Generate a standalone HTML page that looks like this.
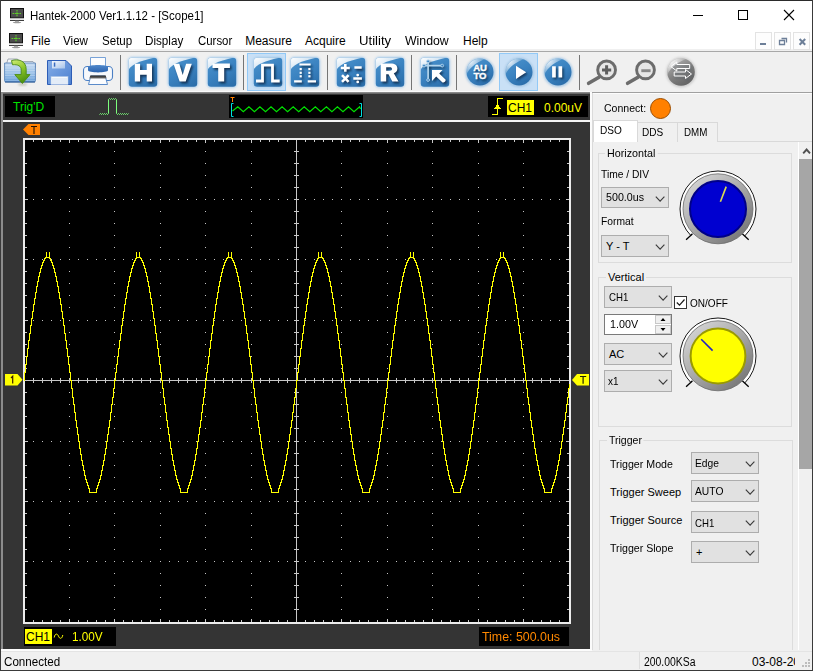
<!DOCTYPE html>
<html><head><meta charset="utf-8"><title>Hantek-2000</title>
<style>
html,body{margin:0;padding:0;}
body{width:813px;height:671px;overflow:hidden;position:relative;background:#f0f0f0;font-family:"Liberation Sans",sans-serif;font-size:11px;color:#000;}
.abs{position:absolute;}
.t{position:absolute;white-space:nowrap;line-height:1;}
.combo{position:absolute;box-sizing:border-box;background:#e1e1e1;border:1px solid #adadad;}
.combo .t{left:4px;}
.chev{position:absolute;right:3px;top:8px;width:10px;height:7px;}
.grp{position:absolute;box-sizing:border-box;border:1px solid #dcdcdc;}
.grp>.lbl{position:absolute;background:#f0f0f0;padding:0 2px;white-space:nowrap;line-height:1;}
.sep{position:absolute;width:1px;background:#757575;top:55px;height:35px;}
.mi{position:absolute;top:34px;font-size:12px;white-space:nowrap;line-height:14px;}
#title{transform:scaleX(0.956);transform-origin:0 0;}
#m_View{transform:scaleX(0.969);transform-origin:0 0;}
#m_Setup{transform:scaleX(0.964);transform-origin:0 0;}
#m_Display{transform:scaleX(0.973);transform-origin:0 0;margin-left:-0.64px;}
#m_Cursor{transform:scaleX(0.951);transform-origin:0 0;}
#m_Measure{margin-left:-0.80px;}
#m_Utility{transform:scaleX(1.095);transform-origin:0 0;}
#m_Window{transform:scaleX(1.024);transform-origin:0 0;}
#v1{transform:scaleX(0.979);transform-origin:0 0;margin-left:-0.96px;}
#time{transform:scaleX(1.032);transform-origin:0 0;}
#connected{transform:scaleX(0.968);transform-origin:0 0;}
#ksa{transform:scaleX(0.867);transform-origin:0 0;}
#connect{transform:scaleX(0.958);transform-origin:0 0;}
#dso{transform:scaleX(0.917);transform-origin:0 0;}
#dds{transform:scaleX(0.913);transform-origin:0 0;}
#dmm{transform:scaleX(0.889);transform-origin:0 0;}
#lh{transform:scaleX(0.977);transform-origin:0 0;margin-left:-1.28px;}
#timediv{transform:scaleX(0.932);transform-origin:0 0;}
#c_time{transform:scaleX(0.971);transform-origin:0 0;}
#format{transform:scaleX(0.936);transform-origin:0 0;}
#c_ch1_1{transform:scaleX(0.880);transform-origin:0 0;}
#onoff{transform:scaleX(0.912);transform-origin:0 0;}
#spinv{transform:scaleX(0.978);transform-origin:0 0;}
#c_x1{transform:scaleX(0.907);transform-origin:0 0;margin-left:-0.72px;}
#lt{transform:scaleX(0.959);transform-origin:0 0;}
#tm{transform:scaleX(0.968);transform-origin:0 0;}
#tsl{transform:scaleX(0.965);transform-origin:0 0;}
#c_edge{transform:scaleX(0.935);transform-origin:0 0;margin-left:-0.80px;}
#c_auto{transform:scaleX(0.936);transform-origin:0 0;margin-left:-0.80px;}
#c_ch1_2{transform:scaleX(0.880);transform-origin:0 0;margin-left:-0.56px;}
</style></head><body>

<!-- window frame -->
<div class="abs" style="left:0;top:0;width:813px;height:49px;background:#fff;"></div>
<div class="abs" style="left:0;top:0;width:813px;height:1px;background:#2b2b2b;"></div>
<div class="abs" style="left:0;top:0;width:1px;height:671px;background:#3a3a3a;"></div>
<div class="abs" style="left:812px;top:0;width:1px;height:671px;background:#3a3a3a;"></div>
<div class="abs" style="left:0;top:670px;width:813px;height:1px;background:#3a3a3a;"></div>

<!-- title -->
<svg class="abs" style="left:9px;top:7px" width="16" height="17" viewBox="0 0 16 17"><rect x="1" y="1" width="14" height="10.500" fill="#111"/><rect x="2" y="2" width="12" height="8.500" fill="#4a4a4a"/><path d="M2 4h12M2 6h12M2 8h12" stroke="#5a5a5a" stroke-width="0.500"/><path d="M3.500 6.500h9M8 3v7" stroke="#5fd028" stroke-width="1.100" stroke-dasharray="1.600 0.700"/><rect x="1" y="11.500" width="14" height="2" fill="#e8e8e8"/><rect x="1" y="13" width="14" height="0.800" fill="#111"/><rect x="6" y="13.800" width="4" height="1.200" fill="#aaa"/><ellipse cx="8" cy="15.500" rx="4.200" ry="0.800" fill="#9a9a9a"/></svg>
<div class="t" id="title" style="left:30px;top:9px;font-size:12px;line-height:14px;">Hantek-2000 Ver1.1.12 - [Scope1]</div>
<!-- window buttons -->
<svg class="abs" style="left:680px;top:0" width="133" height="31" viewBox="0 0 133 31"><path d="M13 15.5h10" stroke="#000" stroke-width="1"/><rect x="58.5" y="10.500" width="9" height="9" fill="none" stroke="#000" stroke-width="1"/><path d="M104 10l10 10M114 10l-10 10" stroke="#000" stroke-width="1.1"/></svg>

<!-- menu -->
<svg class="abs" style="left:8px;top:32px" width="16" height="17" viewBox="0 0 16 17"><rect x="1" y="1" width="14" height="10.500" fill="#111"/><rect x="2" y="2" width="12" height="8.500" fill="#4a4a4a"/><path d="M2 4h12M2 6h12M2 8h12" stroke="#5a5a5a" stroke-width="0.500"/><path d="M3.500 6.500h9M8 3v7" stroke="#5fd028" stroke-width="1.100" stroke-dasharray="1.600 0.700"/><rect x="1" y="11.500" width="14" height="2" fill="#e8e8e8"/><rect x="1" y="13" width="14" height="0.800" fill="#111"/><rect x="6" y="13.800" width="4" height="1.200" fill="#aaa"/><ellipse cx="8" cy="15.500" rx="4.200" ry="0.800" fill="#9a9a9a"/></svg>
<div class="mi" style="left:31px" id="m_File">File</div>
<div class="mi" style="left:63px" id="m_View">View</div>
<div class="mi" style="left:102px" id="m_Setup">Setup</div>
<div class="mi" style="left:146px" id="m_Display">Display</div>
<div class="mi" style="left:198px" id="m_Cursor">Cursor</div>
<div class="mi" style="left:246px" id="m_Measure">Measure</div>
<div class="mi" style="left:305px" id="m_Acquire">Acquire</div>
<div class="mi" style="left:359px" id="m_Utility">Utility</div>
<div class="mi" style="left:405px" id="m_Window">Window</div>
<div class="mi" style="left:463px" id="m_Help">Help</div>
<!-- MDI buttons -->
<div class="abs" style="left:755px;top:32px;width:17px;height:18px;box-sizing:border-box;border:1px solid #e3e3e3;background:#fdfdfd"></div>
<div class="abs" style="left:774px;top:32px;width:17px;height:18px;box-sizing:border-box;border:1px solid #e3e3e3;background:#fdfdfd"></div>
<div class="abs" style="left:793px;top:32px;width:17px;height:18px;box-sizing:border-box;border:1px solid #e3e3e3;background:#fdfdfd"></div>
<svg class="abs" style="left:755px;top:32px" width="56" height="18" viewBox="0 0 56 18"><rect x="5" y="11" width="6" height="2" fill="#6d7f98"/><path d="M26.500 6.500h5v4M24.500 8.500h5v4h-5z" fill="none" stroke="#6d7f98" stroke-width="1.300"/><path d="M44.600 7l5.600 5.800M50.200 7l-5.600 5.800" stroke="#6d7f98" stroke-width="2"/></svg>
<div class="abs" style="left:1px;top:51px;width:811px;height:1px;background:#a8a8a8;"></div>

<!-- toolbar -->
<div class="abs" style="left:1px;top:52px;width:811px;height:39px;background:#f0f0f0;"></div>
<div class="abs" style="left:247px;top:53px;width:39px;height:38px;box-sizing:border-box;background:#c9e0f6;border:1px solid #92c9f7;"></div>
<div class="abs" style="left:499px;top:53px;width:39px;height:38px;box-sizing:border-box;background:#c9e0f6;border:1px solid #92c9f7;"></div>
<div class="sep" style="left:120px"></div>
<div class="sep" style="left:243px"></div>
<div class="sep" style="left:327px"></div>
<div class="sep" style="left:411px"></div>
<div class="sep" style="left:456px"></div>
<div class="sep" style="left:579px"></div>
<svg class="abs" style="left:3px;top:56px" width="36" height="32" viewBox="0 0 36 32">
<defs><linearGradient id="fo1" x1="0" y1="0" x2="0" y2="1"><stop offset="0" stop-color="#c8dcf2"/><stop offset="0.6" stop-color="#94bce6"/><stop offset="1" stop-color="#5f98d6"/></linearGradient>
<linearGradient id="fo2" x1="0" y1="0" x2="0.4" y2="1"><stop offset="0" stop-color="#d2ee7a"/><stop offset="0.5" stop-color="#8cc62a"/><stop offset="1" stop-color="#4f9412"/></linearGradient>
<filter id="fo3" x="-30%" y="-30%" width="160%" height="160%"><feGaussianBlur stdDeviation="0.9"/></filter></defs>
<path d="M3.500 8l1.500-5h9.500l1.500 2.500h14l2.400 3v3h-29z" fill="#f2f4f7" stroke="#8e98a6" stroke-width="0.800"/>
<path d="M1.600 7h30.800v17.500c0 1-0.500 1.500-1.500 1.500h-27.800c-1 0-1.500-0.500-1.500-1.500z" fill="url(#fo1)" stroke="#4a78b2" stroke-width="0.800"/>
<path d="M2 9.500h30M2 12h30M2 14.500h30M2 17h30M2 19.500h30M2 22h30M2 24.300h30" stroke="#dceaf8" stroke-width="0.600" opacity="0.600"/>
<path d="M2 26h30" stroke="#355f96" stroke-width="1"/>
<ellipse cx="19.500" cy="28.300" rx="4.500" ry="1.300" fill="#8a8a70" opacity="0.450" filter="url(#fo3)"/>
<path d="M8.500 4.600C15 2.600 23.200 4.500 23.200 13.500V18.600H27L19.400 27.500L11.800 18.600H18.200V14C18.200 10 15 8.300 9.500 8.800z" fill="url(#fo2)" stroke="#4a8a12" stroke-width="0.900" stroke-linejoin="round"/>
</svg>
<svg class="abs" style="left:45px;top:58px" width="30" height="30" viewBox="0 0 30 30">
<defs><linearGradient id="fl1" x1="0" y1="0" x2="1" y2="1"><stop offset="0" stop-color="#86aee8"/><stop offset="1" stop-color="#4c80d0"/></linearGradient>
<linearGradient id="fl2" x1="0" y1="0" x2="1" y2="1"><stop offset="0" stop-color="#f4f8fd"/><stop offset="1" stop-color="#a8c4ea"/></linearGradient></defs>
<path d="M2.500 2.500h18.500l5.500 5.500v18.500h-24z" fill="url(#fl1)" stroke="#2c5cb6" stroke-width="1"/>
<path d="M7 3h13v7.500h-13z" fill="url(#fl2)"/>
<rect x="8.800" y="4.500" width="1.500" height="4.200" fill="#3a6cc0"/>
<rect x="6" y="18.500" width="17" height="8" fill="#f6f9fd" stroke="#a9c2e4" stroke-width="0.600"/>
<path d="M7 21h15M7 23h15M7 25h15" stroke="#c2d4ec" stroke-width="0.700"/>
</svg>
<svg class="abs" style="left:81px;top:55px" width="34" height="32" viewBox="0 0 34 32">
<defs><linearGradient id="pr1" x1="0" y1="0" x2="0" y2="1"><stop offset="0" stop-color="#4f88cc"/><stop offset="1" stop-color="#2a62ae"/></linearGradient>
<linearGradient id="pr2" x1="0" y1="0" x2="0" y2="1"><stop offset="0" stop-color="#222"/><stop offset="1" stop-color="#777"/></linearGradient></defs>
<rect x="2.500" y="11.500" width="29" height="14" rx="3.800" fill="#f6f8fb" stroke="#4a7fc4" stroke-width="1.100"/>
<path d="M9.500 2.500h15v10h-15z" fill="#fbfcfe" stroke="#6a98d2" stroke-width="0.900"/>
<path d="M7 12c0-2.800 20-2.800 20 0v3.300c0 2.800-20 2.800-20 0z" fill="url(#pr1)"/>
<path d="M9.800 21h14.400l2.300 8.500h-19z" fill="#fbfcfe" stroke="#4a7fc4" stroke-width="0.900"/>
<path d="M9.300 20.500h15.400l0.900 3h-17.200z" fill="url(#pr2)"/>
</svg>
<svg class="abs" style="left:124.5px;top:53.5px" width="36" height="36.5" viewBox="-3 -3 36 36.5"><defs><linearGradient id="bH" x1="0.2" y1="0" x2="0.8" y2="1"><stop offset="0" stop-color="#4a92cc"/><stop offset="0.5" stop-color="#3a82c0"/><stop offset="1" stop-color="#2c6fab"/></linearGradient><radialGradient id="gH" cx="0" cy="0" r="1" gradientUnits="userSpaceOnUse" gradientTransform="scale(37.5,24.400000000000002)"><stop offset="0" stop-color="#fff" stop-opacity="1"/><stop offset="0.5" stop-color="#fff" stop-opacity="0.780"/><stop offset="1" stop-color="#fff" stop-opacity="0.180"/></radialGradient><filter id="fH" x="-30%" y="-30%" width="160%" height="160%"><feGaussianBlur stdDeviation="0.9"/></filter><filter id="sH" x="-30%" y="-30%" width="160%" height="160%"><feGaussianBlur stdDeviation="1.0"/></filter><clipPath id="cH"><rect x="0.800" y="0.800" width="28.4" height="28.9" rx="3.200"/></clipPath></defs><rect x="-0.300" y="-0.300" width="30.6" height="31.1" rx="4.500" fill="#a9cdec" opacity="0.900" filter="url(#fH)"/><rect x="0.800" y="0.800" width="28.4" height="28.9" rx="3.200" fill="url(#bH)"/><g clip-path="url(#cH)"><path d="M0 0H30C16.5 3 4.500 5.49 0 13.42z" fill="url(#gH)"/></g><g filter="url(#sH)" opacity="0.850" transform="translate(1.600,1.900)"><path d="M6.800 6.800h5.300v6.300h6.600v-6.300h5.300v17.700h-5.300v-6.700h-6.600v6.700h-5.300z" fill="#0a2845"/></g><path d="M6.800 6.800h5.300v6.300h6.600v-6.300h5.300v17.700h-5.300v-6.700h-6.600v6.700h-5.300z" fill="#fff"/></svg>
<svg class="abs" style="left:164.5px;top:53.5px" width="36" height="36.5" viewBox="-3 -3 36 36.5"><defs><linearGradient id="bV" x1="0.2" y1="0" x2="0.8" y2="1"><stop offset="0" stop-color="#4a92cc"/><stop offset="0.5" stop-color="#3a82c0"/><stop offset="1" stop-color="#2c6fab"/></linearGradient><radialGradient id="gV" cx="0" cy="0" r="1" gradientUnits="userSpaceOnUse" gradientTransform="scale(37.5,24.400000000000002)"><stop offset="0" stop-color="#fff" stop-opacity="1"/><stop offset="0.5" stop-color="#fff" stop-opacity="0.780"/><stop offset="1" stop-color="#fff" stop-opacity="0.180"/></radialGradient><filter id="fV" x="-30%" y="-30%" width="160%" height="160%"><feGaussianBlur stdDeviation="0.9"/></filter><filter id="sV" x="-30%" y="-30%" width="160%" height="160%"><feGaussianBlur stdDeviation="1.0"/></filter><clipPath id="cV"><rect x="0.800" y="0.800" width="28.4" height="28.9" rx="3.200"/></clipPath></defs><rect x="-0.300" y="-0.300" width="30.6" height="31.1" rx="4.500" fill="#a9cdec" opacity="0.900" filter="url(#fV)"/><rect x="0.800" y="0.800" width="28.4" height="28.9" rx="3.200" fill="url(#bV)"/><g clip-path="url(#cV)"><path d="M0 0H30C16.5 3 4.500 5.49 0 13.42z" fill="url(#gV)"/></g><g filter="url(#sV)" opacity="0.850" transform="translate(1.600,1.900)"><path d="M5.500 6.800h5.800l3.400 11.200 3.400-11.200h5.700l-6.100 17.700h-6.100z" fill="#0a2845"/></g><path d="M5.500 6.800h5.800l3.400 11.200 3.400-11.200h5.700l-6.100 17.700h-6.100z" fill="#fff"/></svg>
<svg class="abs" style="left:203.5px;top:53.5px" width="36" height="36.5" viewBox="-3 -3 36 36.5"><defs><linearGradient id="bT" x1="0.2" y1="0" x2="0.8" y2="1"><stop offset="0" stop-color="#4a92cc"/><stop offset="0.5" stop-color="#3a82c0"/><stop offset="1" stop-color="#2c6fab"/></linearGradient><radialGradient id="gT" cx="0" cy="0" r="1" gradientUnits="userSpaceOnUse" gradientTransform="scale(37.5,24.400000000000002)"><stop offset="0" stop-color="#fff" stop-opacity="1"/><stop offset="0.5" stop-color="#fff" stop-opacity="0.780"/><stop offset="1" stop-color="#fff" stop-opacity="0.180"/></radialGradient><filter id="fT" x="-30%" y="-30%" width="160%" height="160%"><feGaussianBlur stdDeviation="0.9"/></filter><filter id="sT" x="-30%" y="-30%" width="160%" height="160%"><feGaussianBlur stdDeviation="1.0"/></filter><clipPath id="cT"><rect x="0.800" y="0.800" width="28.4" height="28.9" rx="3.200"/></clipPath></defs><rect x="-0.300" y="-0.300" width="30.6" height="31.1" rx="4.500" fill="#a9cdec" opacity="0.900" filter="url(#fT)"/><rect x="0.800" y="0.800" width="28.4" height="28.9" rx="3.200" fill="url(#bT)"/><g clip-path="url(#cT)"><path d="M0 0H30C16.5 3 4.500 5.49 0 13.42z" fill="url(#gT)"/></g><g filter="url(#sT)" opacity="0.850" transform="translate(1.600,1.900)"><path d="M5.500 6.600h17.400v4.500h-5.700v13.400h-6v-13.400h-5.700z" fill="#0a2845"/></g><path d="M5.500 6.600h17.400v4.500h-5.700v13.400h-6v-13.400h-5.700z" fill="#fff"/></svg>
<svg class="abs" style="left:249.5px;top:53.5px" width="36" height="36.5" viewBox="-3 -3 36 36.5"><defs><linearGradient id="bP" x1="0.2" y1="0" x2="0.8" y2="1"><stop offset="0" stop-color="#4a92cc"/><stop offset="0.5" stop-color="#3a82c0"/><stop offset="1" stop-color="#2c6fab"/></linearGradient><radialGradient id="gP" cx="0" cy="0" r="1" gradientUnits="userSpaceOnUse" gradientTransform="scale(37.5,24.400000000000002)"><stop offset="0" stop-color="#fff" stop-opacity="1"/><stop offset="0.5" stop-color="#fff" stop-opacity="0.780"/><stop offset="1" stop-color="#fff" stop-opacity="0.180"/></radialGradient><filter id="fP" x="-30%" y="-30%" width="160%" height="160%"><feGaussianBlur stdDeviation="0.9"/></filter><filter id="sP" x="-30%" y="-30%" width="160%" height="160%"><feGaussianBlur stdDeviation="1.0"/></filter><clipPath id="cP"><rect x="0.800" y="0.800" width="28.4" height="28.9" rx="3.200"/></clipPath></defs><rect x="-0.300" y="-0.300" width="30.6" height="31.1" rx="4.500" fill="#a9cdec" opacity="0.900" filter="url(#fP)"/><rect x="0.800" y="0.800" width="28.4" height="28.9" rx="3.200" fill="url(#bP)"/><g clip-path="url(#cP)"><path d="M0 0H30C16.5 3 4.500 5.49 0 13.42z" fill="url(#gP)"/></g><g filter="url(#sP)" opacity="0.850" transform="translate(1.600,1.900)"><path d="M3 24H9.500V8.200H19.500V24H26.700" fill="none" stroke="#0a2845" stroke-width="2.800"/></g><path d="M3 24H9.500V8.200H19.500V24H26.700" fill="none" stroke="#fff" stroke-width="2.800"/></svg>
<svg class="abs" style="left:287px;top:53.5px" width="36" height="36.5" viewBox="-3 -3 36 36.5"><defs><linearGradient id="bD" x1="0.2" y1="0" x2="0.8" y2="1"><stop offset="0" stop-color="#4a92cc"/><stop offset="0.5" stop-color="#3a82c0"/><stop offset="1" stop-color="#2c6fab"/></linearGradient><radialGradient id="gD" cx="0" cy="0" r="1" gradientUnits="userSpaceOnUse" gradientTransform="scale(37.5,24.400000000000002)"><stop offset="0" stop-color="#fff" stop-opacity="1"/><stop offset="0.5" stop-color="#fff" stop-opacity="0.780"/><stop offset="1" stop-color="#fff" stop-opacity="0.180"/></radialGradient><filter id="fD" x="-30%" y="-30%" width="160%" height="160%"><feGaussianBlur stdDeviation="0.9"/></filter><filter id="sD" x="-30%" y="-30%" width="160%" height="160%"><feGaussianBlur stdDeviation="1.0"/></filter><clipPath id="cD"><rect x="0.800" y="0.800" width="28.4" height="28.9" rx="3.200"/></clipPath></defs><rect x="-0.300" y="-0.300" width="30.6" height="31.1" rx="4.500" fill="#a9cdec" opacity="0.900" filter="url(#fD)"/><rect x="0.800" y="0.800" width="28.4" height="28.9" rx="3.200" fill="url(#bD)"/><g clip-path="url(#cD)"><path d="M0 0H30C16.5 3 4.500 5.49 0 13.42z" fill="url(#gD)"/></g><g filter="url(#sD)" opacity="0.850" transform="translate(1.600,1.900)"><path d="M9.400 6.600h11.300v2h-11.300zM4.100 23.200h7.700v2.200h-7.700zM17.700 23.200h8.300v2.200h-8.300z" fill="#0a2845"/><rect x="9.6" y="11" width="2.200" height="2.200" fill="#0a2845"/><rect x="9.6" y="14.7" width="2.200" height="2.200" fill="#0a2845"/><rect x="9.6" y="18.2" width="2.200" height="2.200" fill="#0a2845"/><rect x="18.3" y="11" width="2.200" height="2.200" fill="#0a2845"/><rect x="18.3" y="14.7" width="2.200" height="2.200" fill="#0a2845"/><rect x="18.3" y="18.2" width="2.200" height="2.200" fill="#0a2845"/></g><path d="M9.400 6.600h11.300v2h-11.300zM4.100 23.200h7.700v2.200h-7.700zM17.700 23.200h8.300v2.200h-8.300z" fill="#fff"/><rect x="9.6" y="11" width="2.200" height="2.200" fill="#fff"/><rect x="9.6" y="14.7" width="2.200" height="2.200" fill="#fff"/><rect x="9.6" y="18.2" width="2.200" height="2.200" fill="#fff"/><rect x="18.3" y="11" width="2.200" height="2.200" fill="#fff"/><rect x="18.3" y="14.7" width="2.200" height="2.200" fill="#fff"/><rect x="18.3" y="18.2" width="2.200" height="2.200" fill="#fff"/></svg>
<svg class="abs" style="left:332.5px;top:53.5px" width="36" height="36.5" viewBox="-3 -3 36 36.5"><defs><linearGradient id="bM" x1="0.2" y1="0" x2="0.8" y2="1"><stop offset="0" stop-color="#4a92cc"/><stop offset="0.5" stop-color="#3a82c0"/><stop offset="1" stop-color="#2c6fab"/></linearGradient><radialGradient id="gM" cx="0" cy="0" r="1" gradientUnits="userSpaceOnUse" gradientTransform="scale(37.5,24.400000000000002)"><stop offset="0" stop-color="#fff" stop-opacity="1"/><stop offset="0.5" stop-color="#fff" stop-opacity="0.780"/><stop offset="1" stop-color="#fff" stop-opacity="0.180"/></radialGradient><filter id="fM" x="-30%" y="-30%" width="160%" height="160%"><feGaussianBlur stdDeviation="0.9"/></filter><filter id="sM" x="-30%" y="-30%" width="160%" height="160%"><feGaussianBlur stdDeviation="1.0"/></filter><clipPath id="cM"><rect x="0.800" y="0.800" width="28.4" height="28.9" rx="3.200"/></clipPath></defs><rect x="-0.300" y="-0.300" width="30.6" height="31.1" rx="4.500" fill="#a9cdec" opacity="0.900" filter="url(#fM)"/><rect x="0.800" y="0.800" width="28.4" height="28.9" rx="3.200" fill="url(#bM)"/><g clip-path="url(#cM)"><path d="M0 0H30C16.5 3 4.500 5.49 0 13.42z" fill="url(#gM)"/></g><g filter="url(#sM)" opacity="0.850" transform="translate(1.600,1.900)"><path d="M4.800 11h9M9.300 7v7.800M18.400 10.500h7.300M6 18.200l6.600 6.600M12.600 18.200l-6.600 6.600M17.300 21.500h8.600" stroke="#0a2845" stroke-width="2.600" fill="none"/><circle cx="21.700" cy="18.100" r="1.400" fill="#0a2845"/><circle cx="21.700" cy="24.900" r="1.400" fill="#0a2845"/></g><path d="M4.800 11h9M9.300 7v7.800M18.400 10.500h7.300M6 18.200l6.600 6.600M12.600 18.200l-6.600 6.600M17.300 21.500h8.600" stroke="#fff" stroke-width="2.600" fill="none"/><circle cx="21.700" cy="18.100" r="1.400" fill="#fff"/><circle cx="21.700" cy="24.900" r="1.400" fill="#fff"/></svg>
<svg class="abs" style="left:371.5px;top:53.5px" width="36" height="36.5" viewBox="-3 -3 36 36.5"><defs><linearGradient id="bR" x1="0.2" y1="0" x2="0.8" y2="1"><stop offset="0" stop-color="#4a92cc"/><stop offset="0.5" stop-color="#3a82c0"/><stop offset="1" stop-color="#2c6fab"/></linearGradient><radialGradient id="gR" cx="0" cy="0" r="1" gradientUnits="userSpaceOnUse" gradientTransform="scale(37.5,24.400000000000002)"><stop offset="0" stop-color="#fff" stop-opacity="1"/><stop offset="0.5" stop-color="#fff" stop-opacity="0.780"/><stop offset="1" stop-color="#fff" stop-opacity="0.180"/></radialGradient><filter id="fR" x="-30%" y="-30%" width="160%" height="160%"><feGaussianBlur stdDeviation="0.9"/></filter><filter id="sR" x="-30%" y="-30%" width="160%" height="160%"><feGaussianBlur stdDeviation="1.0"/></filter><clipPath id="cR"><rect x="0.800" y="0.800" width="28.4" height="28.9" rx="3.200"/></clipPath></defs><rect x="-0.300" y="-0.300" width="30.6" height="31.1" rx="4.500" fill="#a9cdec" opacity="0.900" filter="url(#fR)"/><rect x="0.800" y="0.800" width="28.4" height="28.9" rx="3.200" fill="url(#bR)"/><g clip-path="url(#cR)"><path d="M0 0H30C16.5 3 4.500 5.49 0 13.42z" fill="url(#gR)"/></g><g filter="url(#sR)" opacity="0.850" transform="translate(1.600,1.900)"><path d="M5.700 6.400h9.800c4.600 0 6.900 1.900 6.900 5.200 0 2.500-1.300 4-3.600 4.700l4.700 8.200h-6.200l-3.800-7.300h-2.300v7.300h-5.500zM11.200 10.300v3.400h3.600c1.500 0 2.200-0.600 2.200-1.700s-0.700-1.700-2.200-1.700z" fill="#0a2845" fill-rule="evenodd"/></g><path d="M5.700 6.400h9.800c4.600 0 6.900 1.900 6.900 5.200 0 2.500-1.300 4-3.600 4.700l4.700 8.200h-6.200l-3.800-7.300h-2.300v7.300h-5.500zM11.200 10.300v3.400h3.600c1.500 0 2.200-0.600 2.200-1.700s-0.700-1.700-2.200-1.700z" fill="#fff" fill-rule="evenodd"/></svg>
<svg class="abs" style="left:416.5px;top:53.5px" width="36" height="36.5" viewBox="-3 -3 36 36.5"><defs><linearGradient id="bC" x1="0.2" y1="0" x2="0.8" y2="1"><stop offset="0" stop-color="#4a92cc"/><stop offset="0.5" stop-color="#3a82c0"/><stop offset="1" stop-color="#2c6fab"/></linearGradient><radialGradient id="gC" cx="0" cy="0" r="1" gradientUnits="userSpaceOnUse" gradientTransform="scale(37.5,24.400000000000002)"><stop offset="0" stop-color="#fff" stop-opacity="1"/><stop offset="0.5" stop-color="#fff" stop-opacity="0.780"/><stop offset="1" stop-color="#fff" stop-opacity="0.180"/></radialGradient><filter id="fC" x="-30%" y="-30%" width="160%" height="160%"><feGaussianBlur stdDeviation="0.9"/></filter><filter id="sC" x="-30%" y="-30%" width="160%" height="160%"><feGaussianBlur stdDeviation="1.0"/></filter><clipPath id="cC"><rect x="0.800" y="0.800" width="28.4" height="28.9" rx="3.200"/></clipPath></defs><rect x="-0.300" y="-0.300" width="30.6" height="31.1" rx="4.500" fill="#a9cdec" opacity="0.900" filter="url(#fC)"/><rect x="0.800" y="0.800" width="28.4" height="28.9" rx="3.200" fill="url(#bC)"/><g clip-path="url(#cC)"><path d="M0 0H30C16.5 3 4.500 5.49 0 13.42z" fill="url(#gC)"/></g><g filter="url(#sC)" opacity="0.850" transform="translate(1.600,1.900)"><path d="M4.200 8.600H21.900M8.100 4.900V22.600" stroke="#0a2845" stroke-width="1.700" fill="none"/><g fill="#3a82c0" stroke="#0a2845" stroke-width="0.900"><circle cx="4" cy="8.600" r="1.400"/><circle cx="22.200" cy="8.600" r="1.400"/><circle cx="8.100" cy="4.300" r="1.400"/><circle cx="8.100" cy="23" r="1.400"/></g><path d="M12 13h10.500l-3.300 3.400 6.300 6c1 1 -2 4-3 3l-6.300-6-4.200 4.600z" fill="#0a2845"/></g><path d="M4.200 8.600H21.900M8.100 4.900V22.600" stroke="#b4d6ee" stroke-width="1.700" fill="none"/><g fill="#3a82c0" stroke="#b4d6ee" stroke-width="0.900"><circle cx="4" cy="8.600" r="1.400"/><circle cx="22.200" cy="8.600" r="1.400"/><circle cx="8.100" cy="4.300" r="1.400"/><circle cx="8.100" cy="23" r="1.400"/></g><path d="M12 13h10.500l-3.300 3.400 6.300 6c1 1 -2 4-3 3l-6.300-6-4.200 4.600z" fill="#fff"/></svg>
<svg class="abs" style="left:461.5px;top:54.2px" width="36" height="36" viewBox="-18 -18 36 36"><defs><linearGradient id="bA" x1="0.2" y1="0" x2="0.8" y2="1"><stop offset="0" stop-color="#4a92cc"/><stop offset="0.5" stop-color="#3a82c0"/><stop offset="1" stop-color="#2a6aa6"/></linearGradient><radialGradient id="gA" cx="-10" cy="-11" r="16" gradientUnits="userSpaceOnUse"><stop offset="0" stop-color="#fff" stop-opacity="0.900"/><stop offset="0.5" stop-color="#fff" stop-opacity="0.500"/><stop offset="1" stop-color="#fff" stop-opacity="0.100"/></radialGradient><filter id="fA" x="-30%" y="-30%" width="160%" height="160%"><feGaussianBlur stdDeviation="0.8"/></filter><filter id="sA" x="-30%" y="-30%" width="160%" height="160%"><feGaussianBlur stdDeviation="1.0"/></filter><clipPath id="cA"><circle cx="0" cy="0" r="13.5"/></clipPath></defs><circle cx="0.200" cy="0.400" r="14.8" fill="#a4c6e4" opacity="0.900" filter="url(#fA)"/><circle cx="0" cy="0" r="13.5" fill="url(#bA)"/><g clip-path="url(#cA)"><path d="M-16 -16H14C4 -13 -10 -8 -14 4H-16z" fill="url(#gA)"/></g><g filter="url(#sA)" opacity="0.8" transform="translate(1.400,1.700)"><text x="0" y="-0.800" text-anchor="middle" font-family="Liberation Sans, sans-serif" font-weight="bold" font-size="9.500" fill="#0a2845" stroke="#0a2845" stroke-width="0.350">AU</text><text x="0" y="7.200" text-anchor="middle" font-family="Liberation Sans, sans-serif" font-weight="bold" font-size="9.500" fill="#0a2845" stroke="#0a2845" stroke-width="0.350">TO</text></g><text x="0" y="-0.800" text-anchor="middle" font-family="Liberation Sans, sans-serif" font-weight="bold" font-size="9.500" fill="#fff" stroke="#fff" stroke-width="0.350">AU</text><text x="0" y="7.200" text-anchor="middle" font-family="Liberation Sans, sans-serif" font-weight="bold" font-size="9.500" fill="#fff" stroke="#fff" stroke-width="0.350">TO</text></svg>
<svg class="abs" style="left:501.4px;top:54.2px" width="36" height="36" viewBox="-18 -18 36 36"><defs><linearGradient id="bY" x1="0.2" y1="0" x2="0.8" y2="1"><stop offset="0" stop-color="#4a92cc"/><stop offset="0.5" stop-color="#3a82c0"/><stop offset="1" stop-color="#2a6aa6"/></linearGradient><radialGradient id="gY" cx="-10" cy="-11" r="16" gradientUnits="userSpaceOnUse"><stop offset="0" stop-color="#fff" stop-opacity="0.900"/><stop offset="0.5" stop-color="#fff" stop-opacity="0.500"/><stop offset="1" stop-color="#fff" stop-opacity="0.100"/></radialGradient><filter id="fY" x="-30%" y="-30%" width="160%" height="160%"><feGaussianBlur stdDeviation="0.8"/></filter><filter id="sY" x="-30%" y="-30%" width="160%" height="160%"><feGaussianBlur stdDeviation="1.0"/></filter><clipPath id="cY"><circle cx="0" cy="0" r="13.5"/></clipPath></defs><circle cx="0.200" cy="0.400" r="14.8" fill="#a4c6e4" opacity="0.900" filter="url(#fY)"/><circle cx="0" cy="0" r="13.5" fill="url(#bY)"/><g clip-path="url(#cY)"><path d="M-16 -16H14C4 -13 -10 -8 -14 4H-16z" fill="url(#gY)"/></g><g filter="url(#sY)" opacity="0.8" transform="translate(1.400,1.700)"><path d="M-3 -6.300L7.200 0.300L-3 6.900z" fill="#0a2845"/></g><path d="M-3 -6.300L7.200 0.300L-3 6.900z" fill="#fff"/></svg>
<svg class="abs" style="left:539.6px;top:54.2px" width="36" height="36" viewBox="-18 -18 36 36"><defs><linearGradient id="bZ" x1="0.2" y1="0" x2="0.8" y2="1"><stop offset="0" stop-color="#4a92cc"/><stop offset="0.5" stop-color="#3a82c0"/><stop offset="1" stop-color="#2a6aa6"/></linearGradient><radialGradient id="gZ" cx="-10" cy="-11" r="16" gradientUnits="userSpaceOnUse"><stop offset="0" stop-color="#fff" stop-opacity="0.900"/><stop offset="0.5" stop-color="#fff" stop-opacity="0.500"/><stop offset="1" stop-color="#fff" stop-opacity="0.100"/></radialGradient><filter id="fZ" x="-30%" y="-30%" width="160%" height="160%"><feGaussianBlur stdDeviation="0.8"/></filter><filter id="sZ" x="-30%" y="-30%" width="160%" height="160%"><feGaussianBlur stdDeviation="1.0"/></filter><clipPath id="cZ"><circle cx="0" cy="0" r="13.5"/></clipPath></defs><circle cx="0.200" cy="0.400" r="14.8" fill="#a4c6e4" opacity="0.900" filter="url(#fZ)"/><circle cx="0" cy="0" r="13.5" fill="url(#bZ)"/><g clip-path="url(#cZ)"><path d="M-16 -16H14C4 -13 -10 -8 -14 4H-16z" fill="url(#gZ)"/></g><g filter="url(#sZ)" opacity="0.8" transform="translate(1.400,1.700)"><path d="M-5.900 -5.700h3.700v11.200h-3.700zM0.500 -5.700h3.700v11.200h-3.700z" fill="#0a2845"/></g><path d="M-5.900 -5.700h3.700v11.200h-3.700zM0.500 -5.700h3.700v11.200h-3.700z" fill="#fff"/></svg>
<svg class="abs" style="left:585px;top:56px" width="36" height="32" viewBox="0 0 36 32"><path d="M14 21.200L3.600 27.300" stroke="#6c6c6c" stroke-width="3.600" stroke-linecap="round"/><circle cx="21.600" cy="13.900" r="8.900" fill="#e6e6e6" stroke="#6c6c6c" stroke-width="2.900"/><path d="M17 13.900h9.200M21.600 9.300v9.200" stroke="#5e5e5e" stroke-width="3"/></svg>
<svg class="abs" style="left:624px;top:56px" width="36" height="32" viewBox="0 0 36 32"><path d="M14 21.200L3.600 27.300" stroke="#6c6c6c" stroke-width="3.600" stroke-linecap="round"/><circle cx="21.500" cy="13.900" r="8.900" fill="#e6e6e6" stroke="#6c6c6c" stroke-width="2.900"/><path d="M17.300 14.700h9.300" stroke="#888" stroke-width="2.900"/></svg>
<svg class="abs" style="left:662.5px;top:54.2px" width="36" height="36" viewBox="-18 -18 36 36"><defs><linearGradient id="bG" x1="0.2" y1="0" x2="0.8" y2="1"><stop offset="0" stop-color="#b4b4b4"/><stop offset="0.5" stop-color="#808080"/><stop offset="1" stop-color="#606060"/></linearGradient><radialGradient id="gG" cx="-10" cy="-11" r="16" gradientUnits="userSpaceOnUse"><stop offset="0" stop-color="#fff" stop-opacity="0.900"/><stop offset="0.5" stop-color="#fff" stop-opacity="0.500"/><stop offset="1" stop-color="#fff" stop-opacity="0.100"/></radialGradient><filter id="fG" x="-30%" y="-30%" width="160%" height="160%"><feGaussianBlur stdDeviation="0.8"/></filter><filter id="sG" x="-30%" y="-30%" width="160%" height="160%"><feGaussianBlur stdDeviation="1.0"/></filter><clipPath id="cG"><circle cx="0" cy="0" r="13.799999999999999"/></clipPath></defs><circle cx="0.200" cy="0.400" r="15.1" fill="#cacaca" opacity="0.900" filter="url(#fG)"/><circle cx="0" cy="0" r="13.799999999999999" fill="url(#bG)"/><g clip-path="url(#cG)"><path d="M-16 -16H14C4 -13 -10 -8 -14 4H-16z" fill="url(#gG)"/></g><g filter="url(#sG)" opacity="0.2" transform="translate(1.400,1.700)"><path d="M-10.200 -5.500L-4.200 -10V-7.500H8.700V-3.500H-4.200V-1z M10.500 2L4.500 -2.500V0H-6.800V4H4.500V6.500z" fill="none" stroke="#0a2845" stroke-width="1" stroke-linejoin="miter"/></g><path d="M-10.200 -5.500L-4.200 -10V-7.500H8.700V-3.500H-4.200V-1z M10.500 2L4.500 -2.500V0H-6.800V4H4.500V6.500z" fill="none" stroke="#fff" stroke-width="1" stroke-linejoin="miter"/></svg>

<!-- scope area bg -->
<div class="abs" style="left:1px;top:91px;width:589px;height:1px;background:#fafafa;"></div><div class="abs" style="left:1px;top:92px;width:589px;height:2px;background:linear-gradient(#9a9a9a,#585858);"></div><div class="abs" style="left:592px;top:92px;width:220px;height:1px;background:#a0a0a0;"></div><div class="abs" style="left:592px;top:93px;width:220px;height:1px;background:#fcfcfc;"></div>
<div class="abs" style="left:1px;top:94px;width:589px;height:555px;background:#343434;"></div><div class="abs" style="left:1px;top:649px;width:591px;height:2px;background:#fcfcfc;"></div>
<div class="abs" style="left:1px;top:93px;width:2px;height:556px;background:#8c8c8c;"></div>
<div class="abs" style="left:3px;top:120px;width:587px;height:2px;background:#f4f4f4;"></div>
<div class="abs" style="left:590px;top:92px;width:2px;height:558px;background:#fbfbfb;"></div>
<div class="abs" style="left:592px;top:93px;width:1px;height:557px;background:#dadada;"></div>

<!-- top info bar -->
<div class="abs" style="left:5px;top:96px;width:50px;height:21px;background:#000;"></div>
<div class="t" id="trigd" style="left:13px;top:101px;font-size:12px;color:#00e400;">Trig'D</div>
<svg class="abs" style="left:98px;top:95px" width="34" height="24" viewBox="0 0 34 24"><path d="M1.500 19.500l1-1 1 1 1-1 1 1 1-1 1 1 1-1 1 1 1-1V4.500l1-1 1 1 1-1 1 1 1-1 1 1 1-1 1 1V18.500l1 1 1-1 1 1 1-1 1 1 1-1 1 1 1-1 1 1 1-1 1 1 1-1" fill="none" stroke="#7dff7d" stroke-width="1"/></svg>
<div class="abs" style="left:229px;top:95px;width:134px;height:23px;background:#000;"></div>
<svg class="abs" style="left:229px;top:95px" width="134" height="23" viewBox="0 0 134 23"><path d="M4.500 8.500h-2v13h2M130.500 8.500h2v13h-2" fill="none" stroke="#00e0e0" stroke-width="1"/><path d="M1.500 2.500h4M3.500 2.500v4.500" stroke="#ff8000" stroke-width="1" fill="none"/><polyline points="3.5,16.0 8.8,11.8 14.3,16.8 19.9,11.8 25.4,16.8 30.9,11.8 36.5,16.8 42.0,11.8 47.5,16.8 53.1,11.8 58.6,16.8 64.2,11.8 69.7,16.8 75.2,11.8 80.8,16.8 86.3,11.8 91.8,16.8 97.4,11.8 102.9,16.8 108.4,11.8 114.0,16.8 119.5,11.8 125.0,16.8 130.6,11.8 131.5,14.0" fill="none" stroke="#00e400" stroke-width="1.150"/></svg>
<div class="abs" style="left:488px;top:96px;width:100px;height:21px;background:#000;"></div>
<svg class="abs" style="left:491px;top:97px" width="14" height="19" viewBox="0 0 14 19" shape-rendering="crispEdges"><path d="M1 17.500h5.500V1.500h5" fill="none" stroke="#ffff00" stroke-width="1"/><path d="M6.500 7l-3.500 5h7z" fill="#ffff00"/></svg>
<div class="abs" style="left:507px;top:100px;width:27px;height:15px;background:#ffff00;"></div>
<div class="t" id="ch1a" style="left:508px;top:102px;font-size:12px;color:#000;">CH1</div>
<div class="t" id="uv" style="left:544px;top:102px;font-size:12px;color:#ffff00;">0.00uV</div>

<!-- markers -->
<svg class="abs" style="left:0;top:0" width="600" height="400" viewBox="0 0 600 400">
<path d="M23 129.500l5.500-5.500H40v11H28.500z" fill="#ff8000"/>
<path d="M5 374h12.500l5 5.800-5 5.800H5z" fill="#ffff00"/>
<path d="M572 380l5-6H589v11.600H577z" fill="#ffff00"/>
<path d="M31 126.500h6M34 126.500v7.500" stroke="#201000" stroke-width="1.100" fill="none"/>
<path d="M11 378l1.700-1.800v7.300" stroke="#3a1a00" stroke-width="1.200" fill="none"/>
<path d="M580 376.500h6.200M583.100 376.500v7.300" stroke="#202000" stroke-width="1.200" fill="none"/>
</svg>

<svg class="abs" style="left:0;top:0" width="813" height="671" viewBox="0 0 813 671" shape-rendering="crispEdges">
<rect x="23" y="138" width="548" height="486" fill="#ececec"/>
<rect x="25" y="140" width="544" height="482" fill="#000"/>
<path d="M468 501h1v1h-1zM341 271h1v1h-1zM341 307h1v1h-1zM69 513h1v1h-1zM359 441h1v1h-1zM51 199h1v1h-1zM205 392h1v1h-1zM387 441h1v1h-1zM523 283h1v1h-1zM341 163h1v1h-1zM296 259h1v1h-1zM441 259h1v1h-1zM341 428h1v1h-1zM51 320h1v1h-1zM205 513h1v1h-1zM332 199h1v1h-1zM269 259h1v1h-1zM523 404h1v1h-1zM432 295h1v1h-1zM523 175h1v1h-1zM141 259h1v1h-1zM478 271h1v1h-1zM251 247h1v1h-1zM160 199h1v1h-1zM196 320h1v1h-1zM341 549h1v1h-1zM432 151h1v1h-1zM51 441h1v1h-1zM405 561h1v1h-1zM550 561h1v1h-1zM114 259h1v1h-1zM332 320h1v1h-1zM160 235h1v1h-1zM468 199h1v1h-1zM432 416h1v1h-1zM523 525h1v1h-1zM478 392h1v1h-1zM387 283h1v1h-1zM496 199h1v1h-1zM296 501h1v1h-1zM441 501h1v1h-1zM251 368h1v1h-1zM523 561h1v1h-1zM105 561h1v1h-1zM196 441h1v1h-1zM69 211h1v1h-1zM114 380h1v1h-1zM332 441h1v1h-1zM160 585h1v1h-1zM269 501h1v1h-1zM160 356h1v1h-1zM468 320h1v1h-1zM432 537h1v1h-1zM141 501h1v1h-1zM478 513h1v1h-1zM387 404h1v1h-1zM78 561h1v1h-1zM496 320h1v1h-1zM223 561h1v1h-1zM251 489h1v1h-1zM69 332h1v1h-1zM205 211h1v1h-1zM169 199h1v1h-1zM114 501h1v1h-1zM69 597h1v1h-1zM160 477h1v1h-1zM69 368h1v1h-1zM205 247h1v1h-1zM387 525h1v1h-1zM496 441h1v1h-1zM414 259h1v1h-1zM359 561h1v1h-1zM341 247h1v1h-1zM69 453h1v1h-1zM550 259h1v1h-1zM169 320h1v1h-1zM305 199h1v1h-1zM341 283h1v1h-1zM69 489h1v1h-1zM205 597h1v1h-1zM205 368h1v1h-1zM523 259h1v1h-1zM341 368h1v1h-1zM169 441h1v1h-1zM305 320h1v1h-1zM341 404h1v1h-1zM450 320h1v1h-1zM514 561h1v1h-1zM141 199h1v1h-1zM205 489h1v1h-1zM78 259h1v1h-1zM223 259h1v1h-1zM414 501h1v1h-1zM523 380h1v1h-1zM432 271h1v1h-1zM51 561h1v1h-1zM523 151h1v1h-1zM478 247h1v1h-1zM550 501h1v1h-1zM487 561h1v1h-1zM114 199h1v1h-1zM150 320h1v1h-1zM251 223h1v1h-1zM305 441h1v1h-1zM160 175h1v1h-1zM341 525h1v1h-1zM450 441h1v1h-1zM387 223h1v1h-1zM114 235h1v1h-1zM359 259h1v1h-1zM160 211h1v1h-1zM523 501h1v1h-1zM432 392h1v1h-1zM478 368h1v1h-1zM387 259h1v1h-1zM187 561h1v1h-1zM332 561h1v1h-1zM423 441h1v1h-1zM150 441h1v1h-1zM251 344h1v1h-1zM523 537h1v1h-1zM87 501h1v1h-1zM69 187h1v1h-1zM278 199h1v1h-1zM114 585h1v1h-1zM251 609h1v1h-1zM223 501h1v1h-1zM114 356h1v1h-1zM160 561h1v1h-1zM160 332h1v1h-1zM432 513h1v1h-1zM123 441h1v1h-1zM387 609h1v1h-1zM478 489h1v1h-1zM387 380h1v1h-1zM468 561h1v1h-1zM251 465h1v1h-1zM496 561h1v1h-1zM205 187h1v1h-1zM60 259h1v1h-1zM278 320h1v1h-1zM114 477h1v1h-1zM414 199h1v1h-1zM69 573h1v1h-1zM559 199h1v1h-1zM359 501h1v1h-1zM160 453h1v1h-1zM205 223h1v1h-1zM387 501h1v1h-1zM341 223h1v1h-1zM532 199h1v1h-1zM278 441h1v1h-1zM196 259h1v1h-1zM414 320h1v1h-1zM559 320h1v1h-1zM69 465h1v1h-1zM205 573h1v1h-1zM205 344h1v1h-1zM332 259h1v1h-1zM523 235h1v1h-1zM87 199h1v1h-1zM341 344h1v1h-1zM232 199h1v1h-1zM205 609h1v1h-1zM532 320h1v1h-1zM60 501h1v1h-1zM251 307h1v1h-1zM341 609h1v1h-1zM414 441h1v1h-1zM341 380h1v1h-1zM559 441h1v1h-1zM205 465h1v1h-1zM368 501h1v1h-1zM305 561h1v1h-1zM160 295h1v1h-1zM251 163h1v1h-1zM523 356h1v1h-1zM87 320h1v1h-1zM432 247h1v1h-1zM341 465h1v1h-1zM232 320h1v1h-1zM496 259h1v1h-1zM478 223h1v1h-1zM441 561h1v1h-1zM532 441h1v1h-1zM251 428h1v1h-1zM251 199h1v1h-1zM114 175h1v1h-1zM196 501h1v1h-1zM341 501h1v1h-1zM160 151h1v1h-1zM387 199h1v1h-1zM160 416h1v1h-1zM69 307h1v1h-1zM523 477h1v1h-1zM87 441h1v1h-1zM141 561h1v1h-1zM432 368h1v1h-1zM232 441h1v1h-1zM478 573h1v1h-1zM377 441h1v1h-1zM387 235h1v1h-1zM478 344h1v1h-1zM314 501h1v1h-1zM251 549h1v1h-1zM251 320h1v1h-1zM69 163h1v1h-1zM478 609h1v1h-1zM169 259h1v1h-1zM387 320h1v1h-1zM114 561h1v1h-1zM251 585h1v1h-1zM114 332h1v1h-1zM160 537h1v1h-1zM69 428h1v1h-1zM432 489h1v1h-1zM205 307h1v1h-1zM387 585h1v1h-1zM496 501h1v1h-1zM387 356h1v1h-1zM478 465h1v1h-1zM60 199h1v1h-1zM251 441h1v1h-1zM205 163h1v1h-1zM368 199h1v1h-1zM305 259h1v1h-1zM114 453h1v1h-1zM450 259h1v1h-1zM69 549h1v1h-1zM205 428h1v1h-1zM278 561h1v1h-1zM387 477h1v1h-1zM60 320h1v1h-1zM196 199h1v1h-1zM341 199h1v1h-1zM423 259h1v1h-1zM169 501h1v1h-1zM150 259h1v1h-1zM368 320h1v1h-1zM205 549h1v1h-1zM314 199h1v1h-1zM60 441h1v1h-1zM414 561h1v1h-1zM559 561h1v1h-1zM523 211h1v1h-1zM123 259h1v1h-1zM341 320h1v1h-1zM478 307h1v1h-1zM251 283h1v1h-1zM368 441h1v1h-1zM505 199h1v1h-1zM305 501h1v1h-1zM341 585h1v1h-1zM450 501h1v1h-1zM432 187h1v1h-1zM532 561h1v1h-1zM478 163h1v1h-1zM205 441h1v1h-1zM114 295h1v1h-1zM314 320h1v1h-1zM160 271h1v1h-1zM523 332h1v1h-1zM432 223h1v1h-1zM341 441h1v1h-1zM478 428h1v1h-1zM478 199h1v1h-1zM423 501h1v1h-1zM150 501h1v1h-1zM251 404h1v1h-1zM114 151h1v1h-1zM87 561h1v1h-1zM505 320h1v1h-1zM251 175h1v1h-1zM232 561h1v1h-1zM69 247h1v1h-1zM523 597h1v1h-1zM278 259h1v1h-1zM387 175h1v1h-1zM114 416h1v1h-1zM314 441h1v1h-1zM33 199h1v1h-1zM69 283h1v1h-1zM160 392h1v1h-1zM178 199h1v1h-1zM432 573h1v1h-1zM432 344h1v1h-1zM123 501h1v1h-1zM523 453h1v1h-1zM478 549h1v1h-1zM478 320h1v1h-1zM251 525h1v1h-1zM432 609h1v1h-1zM505 441h1v1h-1zM478 585h1v1h-1zM251 561h1v1h-1zM114 537h1v1h-1zM559 259h1v1h-1zM33 320h1v1h-1zM69 404h1v1h-1zM160 513h1v1h-1zM178 320h1v1h-1zM432 465h1v1h-1zM205 283h1v1h-1zM387 561h1v1h-1zM478 441h1v1h-1zM387 332h1v1h-1zM450 199h1v1h-1zM532 259h1v1h-1zM278 501h1v1h-1zM33 441h1v1h-1zM69 525h1v1h-1zM178 441h1v1h-1zM205 404h1v1h-1zM423 199h1v1h-1zM387 453h1v1h-1zM150 199h1v1h-1zM523 295h1v1h-1zM87 259h1v1h-1zM232 259h1v1h-1zM341 175h1v1h-1zM377 259h1v1h-1zM60 561h1v1h-1zM559 501h1v1h-1zM123 199h1v1h-1zM205 525h1v1h-1zM368 561h1v1h-1zM423 320h1v1h-1zM459 441h1v1h-1zM523 416h1v1h-1zM432 307h1v1h-1zM523 187h1v1h-1zM478 283h1v1h-1zM532 501h1v1h-1zM251 259h1v1h-1zM396 259h1v1h-1zM196 561h1v1h-1zM341 561h1v1h-1zM432 163h1v1h-1zM123 320h1v1h-1zM114 271h1v1h-1zM160 247h1v1h-1zM287 199h1v1h-1zM432 428h1v1h-1zM432 199h1v1h-1zM232 501h1v1h-1zM377 501h1v1h-1zM387 295h1v1h-1zM478 404h1v1h-1zM314 561h1v1h-1zM96 259h1v1h-1zM251 380h1v1h-1zM523 573h1v1h-1zM69 223h1v1h-1zM260 199h1v1h-1zM387 151h1v1h-1zM114 392h1v1h-1zM160 597h1v1h-1zM160 368h1v1h-1zM69 259h1v1h-1zM287 320h1v1h-1zM432 549h1v1h-1zM432 320h1v1h-1zM478 525h1v1h-1zM387 416h1v1h-1zM251 501h1v1h-1zM396 501h1v1h-1zM432 585h1v1h-1zM69 344h1v1h-1zM368 259h1v1h-1zM260 320h1v1h-1zM114 513h1v1h-1zM69 609h1v1h-1zM160 489h1v1h-1zM69 380h1v1h-1zM287 441h1v1h-1zM432 441h1v1h-1zM205 259h1v1h-1zM387 537h1v1h-1zM96 501h1v1h-1zM33 561h1v1h-1zM341 259h1v1h-1zM169 561h1v1h-1zM260 441h1v1h-1zM241 199h1v1h-1zM341 295h1v1h-1zM69 501h1v1h-1zM377 199h1v1h-1zM205 380h1v1h-1zM314 259h1v1h-1zM523 271h1v1h-1zM341 151h1v1h-1zM241 320h1v1h-1zM505 259h1v1h-1zM450 561h1v1h-1zM341 416h1v1h-1zM377 320h1v1h-1zM205 501h1v1h-1zM350 501h1v1h-1zM396 199h1v1h-1zM432 283h1v1h-1zM523 392h1v1h-1zM541 199h1v1h-1zM523 163h1v1h-1zM478 259h1v1h-1zM423 561h1v1h-1zM150 561h1v1h-1zM241 441h1v1h-1zM114 211h1v1h-1zM251 235h1v1h-1zM160 187h1v1h-1zM341 537h1v1h-1zM96 199h1v1h-1zM114 247h1v1h-1zM33 259h1v1h-1zM178 259h1v1h-1zM396 320h1v1h-1zM160 223h1v1h-1zM323 259h1v1h-1zM541 320h1v1h-1zM123 561h1v1h-1zM432 404h1v1h-1zM523 513h1v1h-1zM478 380h1v1h-1zM387 271h1v1h-1zM251 356h1v1h-1zM505 501h1v1h-1zM523 549h1v1h-1zM69 199h1v1h-1zM214 199h1v1h-1zM114 597h1v1h-1zM96 320h1v1h-1zM114 368h1v1h-1zM160 573h1v1h-1zM160 344h1v1h-1zM396 441h1v1h-1zM432 525h1v1h-1zM541 441h1v1h-1zM478 501h1v1h-1zM459 259h1v1h-1zM387 392h1v1h-1zM160 609h1v1h-1zM251 477h1v1h-1zM287 561h1v1h-1zM69 320h1v1h-1zM214 320h1v1h-1zM205 199h1v1h-1zM350 199h1v1h-1zM96 441h1v1h-1zM114 489h1v1h-1zM33 501h1v1h-1zM69 585h1v1h-1zM178 501h1v1h-1zM160 465h1v1h-1zM323 501h1v1h-1zM260 561h1v1h-1zM205 235h1v1h-1zM387 513h1v1h-1zM341 235h1v1h-1zM69 441h1v1h-1zM214 441h1v1h-1zM205 320h1v1h-1zM132 259h1v1h-1zM350 320h1v1h-1zM69 477h1v1h-1zM205 585h1v1h-1zM514 199h1v1h-1zM205 356h1v1h-1zM459 501h1v1h-1zM523 247h1v1h-1zM341 356h1v1h-1zM350 441h1v1h-1zM487 199h1v1h-1zM341 392h1v1h-1zM514 320h1v1h-1zM205 477h1v1h-1zM241 561h1v1h-1zM160 307h1v1h-1zM287 259h1v1h-1zM523 368h1v1h-1zM432 259h1v1h-1zM341 477h1v1h-1zM377 561h1v1h-1zM478 235h1v1h-1zM42 199h1v1h-1zM187 199h1v1h-1zM132 501h1v1h-1zM114 187h1v1h-1zM251 211h1v1h-1zM487 320h1v1h-1zM160 163h1v1h-1zM341 513h1v1h-1zM323 199h1v1h-1zM260 259h1v1h-1zM514 441h1v1h-1zM387 211h1v1h-1zM114 223h1v1h-1zM160 428h1v1h-1zM523 489h1v1h-1zM432 380h1v1h-1zM478 356h1v1h-1zM42 320h1v1h-1zM387 247h1v1h-1zM187 320h1v1h-1zM396 561h1v1h-1zM251 332h1v1h-1zM487 441h1v1h-1zM541 561h1v1h-1zM69 175h1v1h-1zM323 320h1v1h-1zM459 199h1v1h-1zM114 573h1v1h-1zM251 597h1v1h-1zM114 344h1v1h-1zM160 549h1v1h-1zM287 501h1v1h-1zM160 320h1v1h-1zM432 501h1v1h-1zM387 597h1v1h-1zM478 477h1v1h-1zM42 441h1v1h-1zM96 561h1v1h-1zM114 609h1v1h-1zM187 441h1v1h-1zM387 368h1v1h-1zM251 453h1v1h-1zM323 441h1v1h-1zM260 501h1v1h-1zM241 259h1v1h-1zM459 320h1v1h-1zM205 175h1v1h-1zM114 465h1v1h-1zM69 561h1v1h-1zM160 441h1v1h-1zM214 561h1v1h-1zM387 489h1v1h-1zM132 199h1v1h-1zM468 441h1v1h-1zM341 211h1v1h-1zM405 259h1v1h-1zM205 561h1v1h-1zM350 561h1v1h-1zM205 332h1v1h-1zM132 320h1v1h-1zM541 259h1v1h-1zM523 223h1v1h-1zM341 332h1v1h-1zM296 199h1v1h-1zM441 199h1v1h-1zM241 501h1v1h-1zM251 295h1v1h-1zM341 597h1v1h-1zM105 259h1v1h-1zM478 175h1v1h-1zM205 453h1v1h-1zM114 307h1v1h-1zM132 441h1v1h-1zM160 283h1v1h-1zM251 151h1v1h-1zM269 199h1v1h-1zM523 344h1v1h-1zM432 235h1v1h-1zM341 453h1v1h-1zM478 211h1v1h-1zM296 320h1v1h-1zM441 320h1v1h-1zM251 416h1v1h-1zM505 561h1v1h-1zM114 163h1v1h-1zM251 187h1v1h-1zM523 609h1v1h-1zM341 489h1v1h-1zM214 259h1v1h-1zM405 501h1v1h-1zM387 187h1v1h-1zM114 428h1v1h-1zM160 404h1v1h-1zM69 295h1v1h-1zM269 320h1v1h-1zM541 501h1v1h-1zM432 356h1v1h-1zM523 465h1v1h-1zM478 561h1v1h-1zM141 320h1v1h-1zM478 332h1v1h-1zM296 441h1v1h-1zM441 441h1v1h-1zM251 537h1v1h-1zM105 501h1v1h-1zM69 151h1v1h-1zM42 561h1v1h-1zM478 597h1v1h-1zM350 259h1v1h-1zM114 549h1v1h-1zM251 573h1v1h-1zM114 320h1v1h-1zM178 561h1v1h-1zM69 416h1v1h-1zM269 441h1v1h-1zM323 561h1v1h-1zM160 525h1v1h-1zM432 477h1v1h-1zM205 295h1v1h-1zM141 441h1v1h-1zM387 573h1v1h-1zM478 453h1v1h-1zM387 344h1v1h-1zM78 501h1v1h-1zM214 501h1v1h-1zM205 151h1v1h-1zM114 441h1v1h-1zM69 537h1v1h-1zM514 259h1v1h-1zM205 416h1v1h-1zM459 561h1v1h-1zM387 465h1v1h-1zM523 307h1v1h-1zM51 259h1v1h-1zM341 187h1v1h-1zM405 199h1v1h-1zM550 199h1v1h-1zM487 259h1v1h-1zM205 537h1v1h-1zM523 428h1v1h-1zM523 199h1v1h-1zM105 199h1v1h-1zM478 295h1v1h-1zM42 259h1v1h-1zM187 259h1v1h-1zM405 320h1v1h-1zM132 561h1v1h-1zM550 320h1v1h-1zM251 271h1v1h-1zM341 573h1v1h-1zM432 175h1v1h-1zM514 501h1v1h-1zM478 151h1v1h-1zM78 199h1v1h-1zM114 283h1v1h-1zM223 199h1v1h-1zM160 259h1v1h-1zM523 320h1v1h-1zM105 320h1v1h-1zM51 501h1v1h-1zM432 211h1v1h-1zM478 416h1v1h-1zM387 307h1v1h-1zM478 187h1v1h-1zM405 441h1v1h-1zM550 441h1v1h-1zM251 392h1v1h-1zM487 501h1v1h-1zM468 259h1v1h-1zM523 585h1v1h-1zM69 235h1v1h-1zM296 561h1v1h-1zM387 163h1v1h-1zM78 320h1v1h-1zM114 404h1v1h-1zM223 320h1v1h-1zM160 380h1v1h-1zM69 271h1v1h-1zM359 199h1v1h-1zM432 561h1v1h-1zM523 441h1v1h-1zM105 441h1v1h-1zM432 332h1v1h-1zM478 537h1v1h-1zM42 501h1v1h-1zM387 428h1v1h-1zM187 501h1v1h-1zM332 501h1v1h-1zM251 513h1v1h-1zM269 561h1v1h-1zM432 597h1v1h-1zM69 356h1v1h-1zM78 441h1v1h-1zM114 525h1v1h-1zM223 441h1v1h-1zM160 501h1v1h-1zM69 392h1v1h-1zM359 320h1v1h-1zM432 453h1v1h-1zM205 271h1v1h-1zM387 549h1v1h-1z" fill="#c4c4c4"/>
<rect x="25" y="380" width="544" height="1" fill="#c8c8c8"/>
<rect x="296" y="140" width="1" height="482" fill="#c8c8c8"/>
<path d="M33 378h1v5h-1zM33 140h1v2h-1zM33 620h1v2h-1zM42 378h1v5h-1zM42 140h1v2h-1zM42 620h1v2h-1zM51 378h1v5h-1zM51 140h1v2h-1zM51 620h1v2h-1zM60 378h1v5h-1zM60 140h1v2h-1zM60 620h1v2h-1zM69 378h1v5h-1zM69 140h1v3h-1zM69 619h1v3h-1zM78 378h1v5h-1zM78 140h1v2h-1zM78 620h1v2h-1zM87 378h1v5h-1zM87 140h1v2h-1zM87 620h1v2h-1zM96 378h1v5h-1zM96 140h1v2h-1zM96 620h1v2h-1zM105 378h1v5h-1zM105 140h1v2h-1zM105 620h1v2h-1zM114 378h1v5h-1zM114 140h1v3h-1zM114 619h1v3h-1zM123 378h1v5h-1zM123 140h1v2h-1zM123 620h1v2h-1zM132 378h1v5h-1zM132 140h1v2h-1zM132 620h1v2h-1zM141 378h1v5h-1zM141 140h1v2h-1zM141 620h1v2h-1zM150 378h1v5h-1zM150 140h1v2h-1zM150 620h1v2h-1zM160 378h1v5h-1zM160 140h1v3h-1zM160 619h1v3h-1zM169 378h1v5h-1zM169 140h1v2h-1zM169 620h1v2h-1zM178 378h1v5h-1zM178 140h1v2h-1zM178 620h1v2h-1zM187 378h1v5h-1zM187 140h1v2h-1zM187 620h1v2h-1zM196 378h1v5h-1zM196 140h1v2h-1zM196 620h1v2h-1zM205 378h1v5h-1zM205 140h1v3h-1zM205 619h1v3h-1zM214 378h1v5h-1zM214 140h1v2h-1zM214 620h1v2h-1zM223 378h1v5h-1zM223 140h1v2h-1zM223 620h1v2h-1zM232 378h1v5h-1zM232 140h1v2h-1zM232 620h1v2h-1zM241 378h1v5h-1zM241 140h1v2h-1zM241 620h1v2h-1zM251 378h1v5h-1zM251 140h1v3h-1zM251 619h1v3h-1zM260 378h1v5h-1zM260 140h1v2h-1zM260 620h1v2h-1zM269 378h1v5h-1zM269 140h1v2h-1zM269 620h1v2h-1zM278 378h1v5h-1zM278 140h1v2h-1zM278 620h1v2h-1zM287 378h1v5h-1zM287 140h1v2h-1zM287 620h1v2h-1zM305 378h1v5h-1zM305 140h1v2h-1zM305 620h1v2h-1zM314 378h1v5h-1zM314 140h1v2h-1zM314 620h1v2h-1zM323 378h1v5h-1zM323 140h1v2h-1zM323 620h1v2h-1zM332 378h1v5h-1zM332 140h1v2h-1zM332 620h1v2h-1zM341 378h1v5h-1zM341 140h1v3h-1zM341 619h1v3h-1zM350 378h1v5h-1zM350 140h1v2h-1zM350 620h1v2h-1zM359 378h1v5h-1zM359 140h1v2h-1zM359 620h1v2h-1zM368 378h1v5h-1zM368 140h1v2h-1zM368 620h1v2h-1zM377 378h1v5h-1zM377 140h1v2h-1zM377 620h1v2h-1zM387 378h1v5h-1zM387 140h1v3h-1zM387 619h1v3h-1zM396 378h1v5h-1zM396 140h1v2h-1zM396 620h1v2h-1zM405 378h1v5h-1zM405 140h1v2h-1zM405 620h1v2h-1zM414 378h1v5h-1zM414 140h1v2h-1zM414 620h1v2h-1zM423 378h1v5h-1zM423 140h1v2h-1zM423 620h1v2h-1zM432 378h1v5h-1zM432 140h1v3h-1zM432 619h1v3h-1zM441 378h1v5h-1zM441 140h1v2h-1zM441 620h1v2h-1zM450 378h1v5h-1zM450 140h1v2h-1zM450 620h1v2h-1zM459 378h1v5h-1zM459 140h1v2h-1zM459 620h1v2h-1zM468 378h1v5h-1zM468 140h1v2h-1zM468 620h1v2h-1zM478 378h1v5h-1zM478 140h1v3h-1zM478 619h1v3h-1zM487 378h1v5h-1zM487 140h1v2h-1zM487 620h1v2h-1zM496 378h1v5h-1zM496 140h1v2h-1zM496 620h1v2h-1zM505 378h1v5h-1zM505 140h1v2h-1zM505 620h1v2h-1zM514 378h1v5h-1zM514 140h1v2h-1zM514 620h1v2h-1zM523 378h1v5h-1zM523 140h1v3h-1zM523 619h1v3h-1zM532 378h1v5h-1zM532 140h1v2h-1zM532 620h1v2h-1zM541 378h1v5h-1zM541 140h1v2h-1zM541 620h1v2h-1zM550 378h1v5h-1zM550 140h1v2h-1zM550 620h1v2h-1zM559 378h1v5h-1zM559 140h1v2h-1zM559 620h1v2h-1zM294 151h5v1h-5zM25 151h2v1h-2zM567 151h2v1h-2zM294 163h5v1h-5zM25 163h2v1h-2zM567 163h2v1h-2zM294 175h5v1h-5zM25 175h2v1h-2zM567 175h2v1h-2zM294 187h5v1h-5zM25 187h2v1h-2zM567 187h2v1h-2zM294 199h5v1h-5zM25 199h3v1h-3zM566 199h3v1h-3zM294 211h5v1h-5zM25 211h2v1h-2zM567 211h2v1h-2zM294 223h5v1h-5zM25 223h2v1h-2zM567 223h2v1h-2zM294 235h5v1h-5zM25 235h2v1h-2zM567 235h2v1h-2zM294 247h5v1h-5zM25 247h2v1h-2zM567 247h2v1h-2zM294 259h5v1h-5zM25 259h3v1h-3zM566 259h3v1h-3zM294 271h5v1h-5zM25 271h2v1h-2zM567 271h2v1h-2zM294 283h5v1h-5zM25 283h2v1h-2zM567 283h2v1h-2zM294 295h5v1h-5zM25 295h2v1h-2zM567 295h2v1h-2zM294 307h5v1h-5zM25 307h2v1h-2zM567 307h2v1h-2zM294 320h5v1h-5zM25 320h3v1h-3zM566 320h3v1h-3zM294 332h5v1h-5zM25 332h2v1h-2zM567 332h2v1h-2zM294 344h5v1h-5zM25 344h2v1h-2zM567 344h2v1h-2zM294 356h5v1h-5zM25 356h2v1h-2zM567 356h2v1h-2zM294 368h5v1h-5zM25 368h2v1h-2zM567 368h2v1h-2zM294 392h5v1h-5zM25 392h2v1h-2zM567 392h2v1h-2zM294 404h5v1h-5zM25 404h2v1h-2zM567 404h2v1h-2zM294 416h5v1h-5zM25 416h2v1h-2zM567 416h2v1h-2zM294 428h5v1h-5zM25 428h2v1h-2zM567 428h2v1h-2zM294 441h5v1h-5zM25 441h3v1h-3zM566 441h3v1h-3zM294 453h5v1h-5zM25 453h2v1h-2zM567 453h2v1h-2zM294 465h5v1h-5zM25 465h2v1h-2zM567 465h2v1h-2zM294 477h5v1h-5zM25 477h2v1h-2zM567 477h2v1h-2zM294 489h5v1h-5zM25 489h2v1h-2zM567 489h2v1h-2zM294 501h5v1h-5zM25 501h3v1h-3zM566 501h3v1h-3zM294 513h5v1h-5zM25 513h2v1h-2zM567 513h2v1h-2zM294 525h5v1h-5zM25 525h2v1h-2zM567 525h2v1h-2zM294 537h5v1h-5zM25 537h2v1h-2zM567 537h2v1h-2zM294 549h5v1h-5zM25 549h2v1h-2zM567 549h2v1h-2zM294 561h5v1h-5zM25 561h3v1h-3zM566 561h3v1h-3zM294 573h5v1h-5zM25 573h2v1h-2zM567 573h2v1h-2zM294 585h5v1h-5zM25 585h2v1h-2zM567 585h2v1h-2zM294 597h5v1h-5zM25 597h2v1h-2zM567 597h2v1h-2zM294 609h5v1h-5zM25 609h2v1h-2zM567 609h2v1h-2z" fill="#c8c8c8"/>
<path d="M24 372h1v9h-1zM25 364h1v9h-1zM26 356h1v9h-1zM27 348h1v9h-1zM28 340h1v9h-1zM29 333h1v8h-1zM30 325h1v9h-1zM31 318h1v8h-1zM32 311h1v8h-1zM33 304h1v8h-1zM34 298h1v7h-1zM35 292h1v7h-1zM36 286h1v7h-1zM37 281h1v6h-1zM38 276h1v6h-1zM39 272h1v5h-1zM40 268h1v5h-1zM41 265h1v4h-1zM42 262h1v4h-1zM43 260h1v3h-1zM44 258h1v3h-1zM45 257h1v2h-1zM46 257h1v1h-1zM47 257h1v1h-1zM48 257h1v1h-1zM49 257h1v2h-1zM50 258h1v3h-1zM51 260h1v3h-1zM52 262h1v4h-1zM53 265h1v4h-1zM54 268h1v5h-1zM55 272h1v5h-1zM56 276h1v6h-1zM57 281h1v6h-1zM58 286h1v7h-1zM59 292h1v7h-1zM60 298h1v7h-1zM61 304h1v8h-1zM62 311h1v8h-1zM63 318h1v8h-1zM64 325h1v9h-1zM65 333h1v8h-1zM66 340h1v9h-1zM67 348h1v9h-1zM68 356h1v9h-1zM69 364h1v9h-1zM70 372h1v9h-1zM71 380h1v9h-1zM72 388h1v10h-1zM73 397h1v8h-1zM74 404h1v9h-1zM75 412h1v9h-1zM76 420h1v8h-1zM77 427h1v8h-1zM78 434h1v8h-1zM79 441h1v8h-1zM80 448h1v7h-1zM81 454h1v7h-1zM82 460h1v6h-1zM83 465h1v6h-1zM84 470h1v6h-1zM85 475h1v5h-1zM86 479h1v4h-1zM87 482h1v4h-1zM88 485h1v4h-1zM89 488h1v5h-1zM90 492h1v1h-1zM91 492h1v1h-1zM92 492h1v1h-1zM93 492h1v1h-1zM94 492h1v1h-1zM95 492h1v1h-1zM96 488h1v5h-1zM97 485h1v4h-1zM98 482h1v4h-1zM99 479h1v4h-1zM100 475h1v5h-1zM101 470h1v6h-1zM102 465h1v6h-1zM103 460h1v6h-1zM104 454h1v7h-1zM105 448h1v7h-1zM106 441h1v8h-1zM107 434h1v8h-1zM108 427h1v8h-1zM109 420h1v8h-1zM110 412h1v9h-1zM111 404h1v9h-1zM112 397h1v8h-1zM113 388h1v10h-1zM114 380h1v9h-1zM115 372h1v9h-1zM116 364h1v9h-1zM117 356h1v9h-1zM118 348h1v9h-1zM119 340h1v9h-1zM120 333h1v8h-1zM121 325h1v9h-1zM122 318h1v8h-1zM123 311h1v8h-1zM124 304h1v8h-1zM125 298h1v7h-1zM126 292h1v7h-1zM127 286h1v7h-1zM128 281h1v6h-1zM129 276h1v6h-1zM130 272h1v5h-1zM131 268h1v5h-1zM132 265h1v4h-1zM133 262h1v4h-1zM134 260h1v3h-1zM135 258h1v3h-1zM136 257h1v2h-1zM137 257h1v1h-1zM138 257h1v1h-1zM139 257h1v1h-1zM140 257h1v2h-1zM141 258h1v3h-1zM142 260h1v3h-1zM143 262h1v4h-1zM144 265h1v4h-1zM145 268h1v5h-1zM146 272h1v5h-1zM147 276h1v6h-1zM148 281h1v6h-1zM149 286h1v7h-1zM150 292h1v7h-1zM151 298h1v7h-1zM152 304h1v8h-1zM153 311h1v8h-1zM154 318h1v8h-1zM155 325h1v9h-1zM156 333h1v8h-1zM157 340h1v9h-1zM158 348h1v9h-1zM159 356h1v9h-1zM160 364h1v9h-1zM161 372h1v9h-1zM162 380h1v9h-1zM163 388h1v10h-1zM164 397h1v8h-1zM165 404h1v9h-1zM166 412h1v9h-1zM167 420h1v8h-1zM168 427h1v8h-1zM169 434h1v8h-1zM170 441h1v8h-1zM171 448h1v7h-1zM172 454h1v7h-1zM173 460h1v6h-1zM174 465h1v6h-1zM175 470h1v6h-1zM176 475h1v5h-1zM177 479h1v4h-1zM178 482h1v4h-1zM179 485h1v4h-1zM180 488h1v5h-1zM181 492h1v1h-1zM182 492h1v1h-1zM183 492h1v1h-1zM184 492h1v1h-1zM185 492h1v1h-1zM186 492h1v1h-1zM187 488h1v5h-1zM188 485h1v4h-1zM189 482h1v4h-1zM190 479h1v4h-1zM191 475h1v5h-1zM192 470h1v6h-1zM193 465h1v6h-1zM194 460h1v6h-1zM195 454h1v7h-1zM196 448h1v7h-1zM197 441h1v8h-1zM198 434h1v8h-1zM199 427h1v8h-1zM200 420h1v8h-1zM201 412h1v9h-1zM202 404h1v9h-1zM203 397h1v8h-1zM204 388h1v10h-1zM205 380h1v9h-1zM206 372h1v9h-1zM207 364h1v9h-1zM208 356h1v9h-1zM209 348h1v9h-1zM210 340h1v9h-1zM211 333h1v8h-1zM212 325h1v9h-1zM213 318h1v8h-1zM214 311h1v8h-1zM215 304h1v8h-1zM216 298h1v7h-1zM217 292h1v7h-1zM218 286h1v7h-1zM219 281h1v6h-1zM220 276h1v6h-1zM221 272h1v5h-1zM222 268h1v5h-1zM223 265h1v4h-1zM224 262h1v4h-1zM225 260h1v3h-1zM226 258h1v3h-1zM227 257h1v2h-1zM228 257h1v1h-1zM229 257h1v1h-1zM230 257h1v1h-1zM231 257h1v2h-1zM232 258h1v3h-1zM233 260h1v3h-1zM234 262h1v4h-1zM235 265h1v4h-1zM236 268h1v5h-1zM237 272h1v5h-1zM238 276h1v6h-1zM239 281h1v6h-1zM240 286h1v7h-1zM241 292h1v7h-1zM242 298h1v7h-1zM243 304h1v8h-1zM244 311h1v8h-1zM245 318h1v8h-1zM246 325h1v9h-1zM247 333h1v8h-1zM248 340h1v9h-1zM249 348h1v9h-1zM250 356h1v9h-1zM251 364h1v9h-1zM252 372h1v9h-1zM253 380h1v9h-1zM254 388h1v10h-1zM255 397h1v8h-1zM256 404h1v9h-1zM257 412h1v9h-1zM258 420h1v8h-1zM259 427h1v8h-1zM260 434h1v8h-1zM261 441h1v8h-1zM262 448h1v7h-1zM263 454h1v7h-1zM264 460h1v6h-1zM265 465h1v6h-1zM266 470h1v6h-1zM267 475h1v5h-1zM268 479h1v4h-1zM269 482h1v4h-1zM270 485h1v4h-1zM271 488h1v5h-1zM272 492h1v1h-1zM273 492h1v1h-1zM274 492h1v1h-1zM275 492h1v1h-1zM276 492h1v1h-1zM277 492h1v1h-1zM278 488h1v5h-1zM279 485h1v4h-1zM280 482h1v4h-1zM281 479h1v4h-1zM282 475h1v5h-1zM283 470h1v6h-1zM284 465h1v6h-1zM285 460h1v6h-1zM286 454h1v7h-1zM287 448h1v7h-1zM288 441h1v8h-1zM289 434h1v8h-1zM290 427h1v8h-1zM291 420h1v8h-1zM292 412h1v9h-1zM293 404h1v9h-1zM294 397h1v8h-1zM295 388h1v10h-1zM296 380h1v9h-1zM297 372h1v9h-1zM298 364h1v9h-1zM299 356h1v9h-1zM300 348h1v9h-1zM301 340h1v9h-1zM302 333h1v8h-1zM303 325h1v9h-1zM304 318h1v8h-1zM305 311h1v8h-1zM306 304h1v8h-1zM307 298h1v7h-1zM308 292h1v7h-1zM309 286h1v7h-1zM310 281h1v6h-1zM311 276h1v6h-1zM312 272h1v5h-1zM313 268h1v5h-1zM314 265h1v4h-1zM315 262h1v4h-1zM316 260h1v3h-1zM317 258h1v3h-1zM318 257h1v2h-1zM319 257h1v1h-1zM320 257h1v1h-1zM321 257h1v1h-1zM322 257h1v2h-1zM323 258h1v3h-1zM324 260h1v3h-1zM325 262h1v4h-1zM326 265h1v4h-1zM327 268h1v5h-1zM328 272h1v5h-1zM329 276h1v6h-1zM330 281h1v6h-1zM331 286h1v7h-1zM332 292h1v7h-1zM333 298h1v7h-1zM334 304h1v8h-1zM335 311h1v8h-1zM336 318h1v8h-1zM337 325h1v9h-1zM338 333h1v8h-1zM339 340h1v9h-1zM340 348h1v9h-1zM341 356h1v9h-1zM342 364h1v9h-1zM343 372h1v9h-1zM344 380h1v9h-1zM345 388h1v10h-1zM346 397h1v8h-1zM347 404h1v9h-1zM348 412h1v9h-1zM349 420h1v8h-1zM350 427h1v8h-1zM351 434h1v8h-1zM352 441h1v8h-1zM353 448h1v7h-1zM354 454h1v7h-1zM355 460h1v6h-1zM356 465h1v6h-1zM357 470h1v6h-1zM358 475h1v5h-1zM359 479h1v4h-1zM360 482h1v4h-1zM361 485h1v4h-1zM362 488h1v5h-1zM363 492h1v1h-1zM364 492h1v1h-1zM365 492h1v1h-1zM366 492h1v1h-1zM367 492h1v1h-1zM368 492h1v1h-1zM369 488h1v5h-1zM370 485h1v4h-1zM371 482h1v4h-1zM372 479h1v4h-1zM373 475h1v5h-1zM374 470h1v6h-1zM375 465h1v6h-1zM376 460h1v6h-1zM377 454h1v7h-1zM378 448h1v7h-1zM379 441h1v8h-1zM380 434h1v8h-1zM381 427h1v8h-1zM382 420h1v8h-1zM383 412h1v9h-1zM384 404h1v9h-1zM385 397h1v8h-1zM386 388h1v10h-1zM387 380h1v9h-1zM388 372h1v9h-1zM389 364h1v9h-1zM390 356h1v9h-1zM391 348h1v9h-1zM392 340h1v9h-1zM393 333h1v8h-1zM394 325h1v9h-1zM395 318h1v8h-1zM396 311h1v8h-1zM397 304h1v8h-1zM398 298h1v7h-1zM399 292h1v7h-1zM400 286h1v7h-1zM401 281h1v6h-1zM402 276h1v6h-1zM403 272h1v5h-1zM404 268h1v5h-1zM405 265h1v4h-1zM406 262h1v4h-1zM407 260h1v3h-1zM408 258h1v3h-1zM409 257h1v2h-1zM410 257h1v1h-1zM411 257h1v1h-1zM412 257h1v1h-1zM413 257h1v2h-1zM414 258h1v3h-1zM415 260h1v3h-1zM416 262h1v4h-1zM417 265h1v4h-1zM418 268h1v5h-1zM419 272h1v5h-1zM420 276h1v6h-1zM421 281h1v6h-1zM422 286h1v7h-1zM423 292h1v7h-1zM424 298h1v7h-1zM425 304h1v8h-1zM426 311h1v8h-1zM427 318h1v8h-1zM428 325h1v9h-1zM429 333h1v8h-1zM430 340h1v9h-1zM431 348h1v9h-1zM432 356h1v9h-1zM433 364h1v9h-1zM434 372h1v9h-1zM435 380h1v9h-1zM436 388h1v10h-1zM437 397h1v8h-1zM438 404h1v9h-1zM439 412h1v9h-1zM440 420h1v8h-1zM441 427h1v8h-1zM442 434h1v8h-1zM443 441h1v8h-1zM444 448h1v7h-1zM445 454h1v7h-1zM446 460h1v6h-1zM447 465h1v6h-1zM448 470h1v6h-1zM449 475h1v5h-1zM450 479h1v4h-1zM451 482h1v4h-1zM452 485h1v4h-1zM453 488h1v5h-1zM454 492h1v1h-1zM455 492h1v1h-1zM456 492h1v1h-1zM457 492h1v1h-1zM458 492h1v1h-1zM459 492h1v1h-1zM460 488h1v5h-1zM461 485h1v4h-1zM462 482h1v4h-1zM463 479h1v4h-1zM464 475h1v5h-1zM465 470h1v6h-1zM466 465h1v6h-1zM467 460h1v6h-1zM468 454h1v7h-1zM469 448h1v7h-1zM470 441h1v8h-1zM471 434h1v8h-1zM472 427h1v8h-1zM473 420h1v8h-1zM474 412h1v9h-1zM475 404h1v9h-1zM476 397h1v8h-1zM477 388h1v10h-1zM478 380h1v9h-1zM479 372h1v9h-1zM480 364h1v9h-1zM481 356h1v9h-1zM482 348h1v9h-1zM483 340h1v9h-1zM484 333h1v8h-1zM485 325h1v9h-1zM486 318h1v8h-1zM487 311h1v8h-1zM488 304h1v8h-1zM489 298h1v7h-1zM490 292h1v7h-1zM491 286h1v7h-1zM492 281h1v6h-1zM493 276h1v6h-1zM494 272h1v5h-1zM495 268h1v5h-1zM496 265h1v4h-1zM497 262h1v4h-1zM498 260h1v3h-1zM499 258h1v3h-1zM500 257h1v2h-1zM501 257h1v1h-1zM502 257h1v1h-1zM503 257h1v1h-1zM504 257h1v2h-1zM505 258h1v3h-1zM506 260h1v3h-1zM507 262h1v4h-1zM508 265h1v4h-1zM509 268h1v5h-1zM510 272h1v5h-1zM511 276h1v6h-1zM512 281h1v6h-1zM513 286h1v7h-1zM514 292h1v7h-1zM515 298h1v7h-1zM516 304h1v8h-1zM517 311h1v8h-1zM518 318h1v8h-1zM519 325h1v9h-1zM520 333h1v8h-1zM521 340h1v9h-1zM522 348h1v9h-1zM523 356h1v9h-1zM524 364h1v9h-1zM525 372h1v9h-1zM526 380h1v9h-1zM527 388h1v10h-1zM528 397h1v8h-1zM529 404h1v9h-1zM530 412h1v9h-1zM531 420h1v8h-1zM532 427h1v8h-1zM533 434h1v8h-1zM534 441h1v8h-1zM535 448h1v7h-1zM536 454h1v7h-1zM537 460h1v6h-1zM538 465h1v6h-1zM539 470h1v6h-1zM540 475h1v5h-1zM541 479h1v4h-1zM542 482h1v4h-1zM543 485h1v4h-1zM544 488h1v5h-1zM545 492h1v1h-1zM546 492h1v1h-1zM547 492h1v1h-1zM548 492h1v1h-1zM549 492h1v1h-1zM550 492h1v1h-1zM551 488h1v5h-1zM552 485h1v4h-1zM553 482h1v4h-1zM554 479h1v4h-1zM555 475h1v5h-1zM556 470h1v6h-1zM557 465h1v6h-1zM558 460h1v6h-1zM559 454h1v7h-1zM560 448h1v7h-1zM561 441h1v8h-1zM562 434h1v8h-1zM563 427h1v8h-1zM564 420h1v8h-1zM565 412h1v9h-1zM566 404h1v9h-1zM567 397h1v8h-1zM568 388h1v10h-1zM569 384h1v5h-1z" fill="#ffff00"/>
<path d="M46 252h1v5h-1zM49 252h1v5h-1zM136 252h1v5h-1zM139 252h1v5h-1zM228 252h1v5h-1zM231 252h1v5h-1zM318 252h1v5h-1zM321 252h1v5h-1zM410 252h1v5h-1zM413 252h1v5h-1zM500 252h1v5h-1zM503 252h1v5h-1z" fill="#ffff00"/>
</svg>

<!-- bottom info -->
<div class="abs" style="left:24px;top:627px;width:92px;height:19px;background:#000;"></div>
<div class="abs" style="left:25px;top:629px;width:27px;height:15px;background:#ffff00;"></div>
<div class="t" id="ch1b" style="left:26px;top:631px;font-size:12px;color:#000;">CH1</div>
<svg class="abs" style="left:53px;top:631px" width="12" height="10" viewBox="0 0 12 10"><path d="M1.200 6.500C2 2.200 4.300 2.200 5.500 5.200S9 8.200 9.800 4" fill="none" stroke="#ffff00" stroke-width="1"/></svg>
<div class="t" id="v1" style="left:73px;top:631px;font-size:12px;color:#ffff00;">1.00V</div>
<div class="abs" style="left:479px;top:627px;width:90px;height:19px;background:#000;"></div>
<div class="t" id="time" style="left:482px;top:631px;font-size:12px;color:#ff8800;">Time: 500.0us</div>

<!-- status bar -->
<div class="abs" style="left:1px;top:651px;width:811px;height:19px;background:#f0f0f0;"></div><div class="abs" style="left:1px;top:651px;width:811px;height:1px;background:#e4e4e4;"></div>
<div class="t" id="connected" style="left:4px;top:656px;font-size:12px;">Connected</div>
<div class="abs" style="left:639px;top:652px;width:1px;height:17px;background:#dedede;"></div>
<div class="t" id="ksa" style="left:644px;top:656px;font-size:12px;">200.00KSa</div>
<div class="abs" style="left:752px;top:652px;width:43px;height:18px;overflow:hidden;"><div class="t" id="date" style="left:0;top:4px;font-size:12px;">03-08-2023</div></div>
<svg class="abs" style="left:800px;top:658px" width="12" height="12" viewBox="0 0 12 12" shape-rendering="crispEdges"><path d="M8 1h2v2h-2zM5 4h2v2h-2zM8 4h2v2h-2zM2 7h2v2h-2zM5 7h2v2h-2zM8 7h2v2h-2z" fill="#bdbdbd"/></svg>

<!-- right panel -->
<div class="t" id="connect" style="left:604px;top:103px;font-size:11px;">Connect:</div>
<div class="abs" style="left:650px;top:98px;width:21px;height:21px;box-sizing:border-box;border-radius:50%;background:#ff8000;border:1px solid #9a4c00;"></div>
<!-- tabs -->
<div class="abs" style="left:593px;top:141px;width:219px;height:1px;background:#d9d9d9;"></div>
<div class="abs" style="left:637px;top:122px;width:41px;height:20px;box-sizing:border-box;border:1px solid #d9d9d9;border-bottom:none;background:#f0f0f0;"></div>
<div class="abs" style="left:677px;top:122px;width:41px;height:20px;box-sizing:border-box;border:1px solid #d9d9d9;border-bottom:none;background:#f0f0f0;"></div>
<div class="abs" style="left:593px;top:120px;width:45px;height:22px;box-sizing:border-box;border:1px solid #d9d9d9;border-bottom:none;background:#fff;"></div>
<div class="t" id="dso" style="left:600px;top:125px;font-size:11px;">DSO</div>
<div class="t" id="dds" style="left:642px;top:127px;font-size:11px;">DDS</div>
<div class="t" id="dmm" style="left:684px;top:127px;font-size:11px;">DMM</div>

<!-- scrollbar -->
<div class="abs" style="left:798px;top:142px;width:1px;height:508px;background:#fff;"></div><div class="abs" style="left:799px;top:142px;width:13px;height:508px;background:#f0f0f0;"></div>
<svg class="abs" style="left:800px;top:146px" width="13" height="9" viewBox="0 0 13 9"><path d="M3.200 7.300l3.400-3.800 3.400 3.800" fill="none" stroke="#505050" stroke-width="1.900"/></svg>
<div class="abs" style="left:799px;top:159px;width:13px;height:310px;background:#a6a6a6;"></div>

<!-- Horizontal group -->
<div class="grp" style="left:598px;top:153px;width:194px;height:110px;"><div class="lbl" id="lh" style="left:7px;top:-6px;">Horizontal</div></div>
<div class="t" id="timediv" style="left:601px;top:169px;">Time / DIV</div>
<div class="combo" style="left:601px;top:187px;width:68px;height:21px;"><div class="t" id="c_time" style="top:4px;">500.0us</div><svg class="chev" viewBox="0 0 10 7"><path d="M0.800 0.700l4.300 4.400 4.300-4.400" fill="none" stroke="#3c3c3c" stroke-width="1.150"/></svg></div>
<div class="t" id="format" style="left:601px;top:216px;">Format</div>
<div class="combo" style="left:601px;top:235px;width:68px;height:22px;"><div class="t" id="c_yt" style="top:5px;">Y - T</div><svg class="chev" viewBox="0 0 10 7"><path d="M0.800 0.700l4.300 4.400 4.300-4.400" fill="none" stroke="#3c3c3c" stroke-width="1.150"/></svg></div>
<svg class="abs" style="left:670.2px;top:165px" width="96" height="88" viewBox="670.2 165 96 88"><defs><linearGradient id="g1" x1="0.15" y1="0.1" x2="0.85" y2="0.9"><stop offset="0" stop-color="#d2d2d2"/><stop offset="0.5" stop-color="#a8a8a8"/><stop offset="1" stop-color="#787878"/></linearGradient></defs><path d="M692.53 234.67A36.3 36.3 0 1 1 743.87 234.67" fill="none" stroke="#fff" stroke-width="2.600"/><path d="M691.33 235.87A38 38 0 1 1 745.07 235.87" fill="none" stroke="#1a1a1a" stroke-width="1"/><path d="M692.7 233.7l-6.400 6M742.5 233.7l6.400 6" stroke="#000" stroke-width="1.300"/><circle cx="718.2" cy="208.8" r="35" fill="url(#g1)" stroke="#6a6a6a" stroke-width="0.800"/><circle cx="718.2" cy="209" r="28.0" fill="#0000d0" stroke="#000088" stroke-width="2"/><path d="M726.4 186.6L720.6 201.8" stroke="#dcdc50" stroke-width="1.600"/></svg>

<!-- Vertical group -->
<div class="grp" style="left:598px;top:277px;width:194px;height:150px;"><div class="lbl" id="lv" style="left:7px;top:-6px;">Vertical</div></div>
<div class="combo" style="left:604px;top:286px;width:68px;height:22px;"><div class="t" id="c_ch1_1" style="top:5px;">CH1</div><svg class="chev" viewBox="0 0 10 7"><path d="M0.800 0.700l4.300 4.400 4.300-4.400" fill="none" stroke="#3c3c3c" stroke-width="1.150"/></svg></div>
<div class="abs" style="left:674px;top:296px;width:13px;height:13px;box-sizing:border-box;border:1px solid #333;background:#fff;"></div>
<svg class="abs" style="left:674px;top:296px" width="13" height="13" viewBox="0 0 13 13"><path d="M2.800 6.500l2.700 2.700 5-5.700" fill="none" stroke="#1a1a1a" stroke-width="1.200"/></svg>
<div class="t" id="onoff" style="left:690px;top:298px;">ON/OFF</div>
<div class="abs" style="left:604px;top:314px;width:68px;height:21px;box-sizing:border-box;border:1px solid #7a7a7a;background:#fff;"></div>
<div class="t" id="spinv" style="left:610px;top:319px;">1.00V</div>
<div class="abs" style="left:655px;top:315px;width:16px;height:9px;box-sizing:border-box;border:1px solid #c8c8c8;background:#f0f0f0;"></div>
<div class="abs" style="left:655px;top:325px;width:16px;height:9px;box-sizing:border-box;border:1px solid #c8c8c8;background:#f0f0f0;"></div>
<svg class="abs" style="left:655px;top:315px" width="16" height="19" viewBox="0 0 16 19"><path d="M5.500 6h5l-2.500-3zM5.500 13h5l-2.500 3z" fill="#000"/></svg>
<div class="combo" style="left:604px;top:343px;width:68px;height:22px;"><div class="t" id="c_ac" style="top:5px;">AC</div><svg class="chev" viewBox="0 0 10 7"><path d="M0.800 0.700l4.300 4.400 4.300-4.400" fill="none" stroke="#3c3c3c" stroke-width="1.150"/></svg></div>
<div class="combo" style="left:604px;top:370px;width:68px;height:22px;"><div class="t" id="c_x1" style="top:5px;">x1</div><svg class="chev" viewBox="0 0 10 7"><path d="M0.800 0.700l4.300 4.400 4.300-4.400" fill="none" stroke="#3c3c3c" stroke-width="1.150"/></svg></div>
<svg class="abs" style="left:670.2px;top:312px" width="96" height="88" viewBox="670.2 312 96 88"><defs><linearGradient id="g2" x1="0.15" y1="0.1" x2="0.85" y2="0.9"><stop offset="0" stop-color="#d2d2d2"/><stop offset="0.5" stop-color="#a8a8a8"/><stop offset="1" stop-color="#787878"/></linearGradient></defs><path d="M692.53 381.67A36.3 36.3 0 1 1 743.87 381.67" fill="none" stroke="#fff" stroke-width="2.600"/><path d="M691.33 382.87A38 38 0 1 1 745.07 382.87" fill="none" stroke="#1a1a1a" stroke-width="1"/><path d="M692.7 380.7l-6.400 6M742.5 380.7l6.400 6" stroke="#000" stroke-width="1.300"/><circle cx="718.2" cy="355.8" r="35" fill="url(#g2)" stroke="#6a6a6a" stroke-width="0.800"/><circle cx="718.2" cy="356" r="27.4" fill="#ffff00" stroke="#9a9a00" stroke-width="2"/><path d="M701.4 339.3L712.8 350.6" stroke="#2222c8" stroke-width="1.600"/></svg>

<!-- Trigger group -->
<div class="grp" style="left:599px;top:440px;width:194px;height:210px;border-bottom:none;"><div class="lbl" id="lt" style="left:7px;top:-6px;">Trigger</div></div>
<div class="t" id="tm" style="left:610px;top:459px;">Trigger Mode</div>
<div class="combo" style="left:691px;top:452px;width:68px;height:22px;"><div class="t" id="c_edge" style="top:5px;">Edge</div><svg class="chev" viewBox="0 0 10 7"><path d="M0.800 0.700l4.300 4.400 4.300-4.400" fill="none" stroke="#3c3c3c" stroke-width="1.150"/></svg></div>
<div class="t" id="ts" style="left:610px;top:487px;">Trigger Sweep</div>
<div class="combo" style="left:691px;top:480px;width:68px;height:22px;"><div class="t" id="c_auto" style="top:5px;">AUTO</div><svg class="chev" viewBox="0 0 10 7"><path d="M0.800 0.700l4.300 4.400 4.300-4.400" fill="none" stroke="#3c3c3c" stroke-width="1.150"/></svg></div>
<div class="t" id="tso" style="left:610px;top:515px;">Trigger Source</div>
<div class="combo" style="left:691px;top:511px;width:68px;height:22px;"><div class="t" id="c_ch1_2" style="top:6px;">CH1</div><svg class="chev" viewBox="0 0 10 7"><path d="M0.800 0.700l4.300 4.400 4.300-4.400" fill="none" stroke="#3c3c3c" stroke-width="1.150"/></svg></div>
<div class="t" id="tsl" style="left:610px;top:543px;">Trigger Slope</div>
<div class="combo" style="left:691px;top:541px;width:68px;height:22px;"><div class="t" id="c_plus" style="top:5px;">+</div><svg class="chev" viewBox="0 0 10 7"><path d="M0.800 0.700l4.300 4.400 4.300-4.400" fill="none" stroke="#3c3c3c" stroke-width="1.150"/></svg></div>

</body></html>
